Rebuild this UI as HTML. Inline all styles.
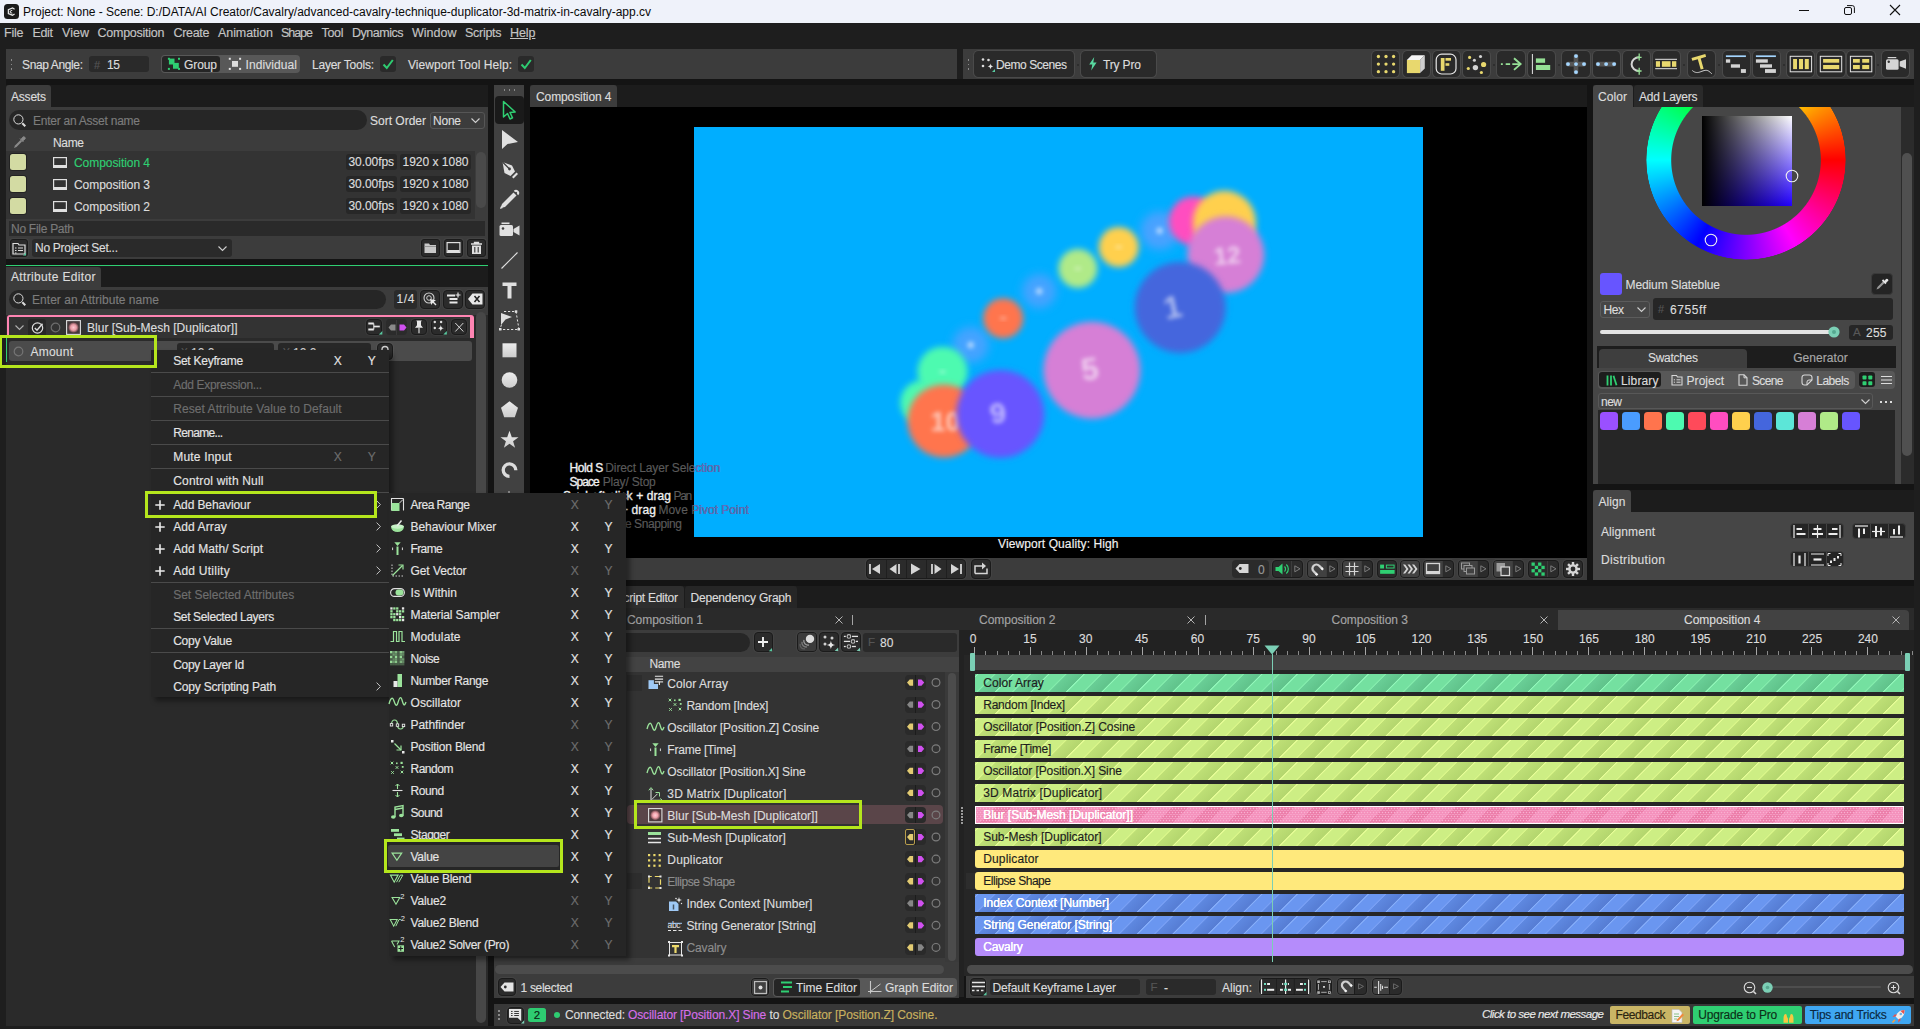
<!DOCTYPE html>
<html><head><meta charset="utf-8"><title>Cavalry</title>
<style>
html,body{margin:0;padding:0;background:#1e1e1e;}
body{width:1920px;height:1029px;overflow:hidden;position:relative;font-family:'Liberation Sans',sans-serif;font-size:12px;color:#dcdcdc;}
#app{position:absolute;left:0;top:0;width:1920px;height:1029px;overflow:hidden;background:#1e1e1e;}
#app div,#app svg{position:absolute;box-sizing:border-box;}
#app svg{overflow:visible;}
#app div{-webkit-text-stroke:0.15px currentColor;}

</style></head><body><div id="app">
<div style="left:0.00px;top:0.00px;width:1920.00px;height:22.60px;background:#eff2fa;"></div>
<svg style="left:4.00px;top:4.00px;" width="15" height="15" viewBox="0 0 15 15"><rect x="0" y="0" width="15" height="15" rx="3.5" fill="#1b1b1b"/><path d="M10.6 5.2 8.6 4 4.4 5.6 4.4 9.6 8.4 11.2 10.6 10" fill="none" stroke="#e8e8e8" stroke-width="1.3"/><path d="M8.3 6.3 6.3 7 6.3 8.6 8.3 9.2" fill="none" stroke="#e8e8e8" stroke-width="1"/></svg>
<div style="left:23.00px;top:2.50px;height:18px;line-height:18px;color:#0a0a0a;white-space:pre;font-family:'Liberation Sans',sans-serif;font-size:12px;letter-spacing:-0.016px;-webkit-text-stroke:0;">Project: None - Scene: D:/DATA/AI Creator/Cavalry/advanced-cavalry-technique-duplicator-3d-matrix-in-cavalry-app.cv</div>
<svg style="left:1798.00px;top:3.90px;" width="14" height="14" viewBox="0 0 14 14"><path d="M1 6.5h10" stroke="#111" stroke-width="1"/></svg>
<svg style="left:1842.90px;top:4.10px;" width="14" height="14" viewBox="0 0 14 14"><rect x="1.5" y="3.5" width="7" height="7" rx="1.5" fill="none" stroke="#111" stroke-width="1"/><path d="M4 1.600h5.300a2.100 2.100 0 0 1 2.100 2.100V9" fill="none" stroke="#111" stroke-width="1"/></svg>
<svg style="left:1889.10px;top:4.10px;" width="14" height="14" viewBox="0 0 14 14"><path d="M1 1l10 10M11 1 1 11" stroke="#111" stroke-width="1.1"/></svg>
<div style="left:0.00px;top:23.00px;width:1920.00px;height:26.00px;background:#1e1e1e;"></div>
<div style="left:4.00px;top:23.75px;height:18.5px;line-height:18.5px;color:#c4c4c4;white-space:pre;font-family:'Liberation Sans',sans-serif;font-size:12.5px;letter-spacing:-0.219px;">File</div>
<div style="left:32.50px;top:23.75px;height:18.5px;line-height:18.5px;color:#c4c4c4;white-space:pre;font-family:'Liberation Sans',sans-serif;font-size:12.5px;letter-spacing:-0.349px;">Edit</div>
<div style="left:62.00px;top:23.75px;height:18.5px;line-height:18.5px;color:#c4c4c4;white-space:pre;font-family:'Liberation Sans',sans-serif;font-size:12.5px;letter-spacing:0.042px;">View</div>
<div style="left:97.50px;top:23.75px;height:18.5px;line-height:18.5px;color:#c4c4c4;white-space:pre;font-family:'Liberation Sans',sans-serif;font-size:12.5px;letter-spacing:-0.248px;">Composition</div>
<div style="left:173.50px;top:23.75px;height:18.5px;line-height:18.5px;color:#c4c4c4;white-space:pre;font-family:'Liberation Sans',sans-serif;font-size:12.5px;letter-spacing:-0.306px;">Create</div>
<div style="left:218.00px;top:23.75px;height:18.5px;line-height:18.5px;color:#c4c4c4;white-space:pre;font-family:'Liberation Sans',sans-serif;font-size:12.5px;letter-spacing:-0.074px;">Animation</div>
<div style="left:281.00px;top:23.75px;height:18.5px;line-height:18.5px;color:#c4c4c4;white-space:pre;font-family:'Liberation Sans',sans-serif;font-size:12.5px;letter-spacing:-1.039px;">Shape</div>
<div style="left:321.50px;top:23.75px;height:18.5px;line-height:18.5px;color:#c4c4c4;white-space:pre;font-family:'Liberation Sans',sans-serif;font-size:12.5px;letter-spacing:-0.312px;">Tool</div>
<div style="left:352.00px;top:23.75px;height:18.5px;line-height:18.5px;color:#c4c4c4;white-space:pre;font-family:'Liberation Sans',sans-serif;font-size:12.5px;letter-spacing:-0.482px;">Dynamics</div>
<div style="left:412.00px;top:23.75px;height:18.5px;line-height:18.5px;color:#c4c4c4;white-space:pre;font-family:'Liberation Sans',sans-serif;font-size:12.5px;letter-spacing:0.006px;">Window</div>
<div style="left:465.00px;top:23.75px;height:18.5px;line-height:18.5px;color:#c4c4c4;white-space:pre;font-family:'Liberation Sans',sans-serif;font-size:12.5px;letter-spacing:-0.284px;">Scripts</div>
<div style="left:510.00px;top:23.75px;height:18.5px;line-height:18.5px;color:#c4c4c4;white-space:pre;font-family:'Liberation Sans',sans-serif;font-size:12.5px;letter-spacing:-0.073px;text-decoration:underline;">Help</div>
<div style="left:6.00px;top:49.00px;width:951.00px;height:30.00px;background:#3c3c3c;"></div>
<div style="left:10.50px;top:59.00px;width:1.50px;height:1.50px;background:#8a8a8a;"></div>
<div style="left:10.50px;top:63.50px;width:1.50px;height:1.50px;background:#8a8a8a;"></div>
<div style="left:10.50px;top:68.00px;width:1.50px;height:1.50px;background:#8a8a8a;"></div>
<div style="left:22.00px;top:56.00px;height:18px;line-height:18px;color:#dcdcdc;white-space:pre;font-family:'Liberation Sans',sans-serif;font-size:12px;letter-spacing:-0.373px;">Snap Angle:</div>
<div style="left:89.00px;top:56.00px;width:60.00px;height:16.00px;background:#2a2a2a;border-radius:3px;"></div>
<div style="left:94.00px;top:56.50px;height:17px;line-height:17px;color:#555;white-space:pre;font-family:'Liberation Sans',sans-serif;font-size:11px;">#</div>
<div style="left:107.00px;top:56.00px;height:18px;line-height:18px;color:#dcdcdc;white-space:pre;font-family:'Liberation Sans',sans-serif;font-size:12px;letter-spacing:-0.359px;">15</div>
<div style="left:161.00px;top:55.00px;width:139.00px;height:18.00px;background:#585858;border-radius:4px;"></div>
<div style="left:162.20px;top:56.00px;width:57.60px;height:15.80px;background:#252525;border-radius:3px;"></div>
<svg style="left:0;top:0;pointer-events:none;" width="1920" height="1029" viewBox="0 0 1920 1029"><rect x="167.90" y="57.80" width="2.00" height="2.00" fill="#2ecc71" /><rect x="167.90" y="67.90" width="2.00" height="2.00" fill="#2ecc71" /><rect x="178.00" y="57.80" width="2.00" height="2.00" fill="#2ecc71" /><rect x="178.00" y="67.90" width="2.00" height="2.00" fill="#2ecc71" /><rect x="168.90" y="58.60" width="5.60" height="5.90" fill="#2ecc71" /><rect x="173.00" y="62.90" width="5.80" height="5.85" fill="#2ecc71" /><rect x="228.80" y="57.80" width="2.00" height="2.00" fill="#e2e2e2" /><rect x="228.80" y="67.90" width="2.00" height="2.00" fill="#e2e2e2" /><rect x="239.10" y="57.80" width="2.00" height="2.00" fill="#e2e2e2" /><rect x="239.10" y="67.90" width="2.00" height="2.00" fill="#e2e2e2" /><rect x="232.00" y="61.00" width="6.00" height="5.80" fill="#dcdcdc" /></svg>
<div style="left:184.00px;top:56.00px;height:18px;line-height:18px;color:#dcdcdc;white-space:pre;font-family:'Liberation Sans',sans-serif;font-size:12px;letter-spacing:-0.090px;">Group</div>
<div style="left:245.50px;top:56.00px;height:18px;line-height:18px;color:#dcdcdc;white-space:pre;font-family:'Liberation Sans',sans-serif;font-size:12px;letter-spacing:0.089px;">Individual</div>
<div style="left:312.00px;top:56.00px;height:18px;line-height:18px;color:#dcdcdc;white-space:pre;font-family:'Liberation Sans',sans-serif;font-size:12px;letter-spacing:-0.226px;">Layer Tools:</div>
<div style="left:380.00px;top:56.00px;width:16.00px;height:16.00px;background:#2a2a2a;border-radius:3px;"></div>
<svg style="left:382.00px;top:58.00px;" width="12" height="12" viewBox="0 0 12 12"><path d="M1.500 6.500 4.800 10 10.800 2" fill="none" stroke="#2ecc71" stroke-width="2"/></svg>
<div style="left:408.00px;top:56.00px;height:18px;line-height:18px;color:#dcdcdc;white-space:pre;font-family:'Liberation Sans',sans-serif;font-size:12px;letter-spacing:0.058px;">Viewport Tool Help:</div>
<div style="left:517.50px;top:56.00px;width:16.50px;height:16.00px;background:#2a2a2a;border-radius:3px;"></div>
<svg style="left:519.80px;top:58.00px;" width="12" height="12" viewBox="0 0 12 12"><path d="M1.500 6.500 4.800 10 10.800 2" fill="none" stroke="#2ecc71" stroke-width="2"/></svg>
<div style="left:963.00px;top:49.00px;width:950.60px;height:30.00px;background:#3c3c3c;"></div>
<div style="left:967.50px;top:59.00px;width:1.50px;height:1.50px;background:#8a8a8a;"></div>
<div style="left:967.50px;top:63.50px;width:1.50px;height:1.50px;background:#8a8a8a;"></div>
<div style="left:967.50px;top:68.00px;width:1.50px;height:1.50px;background:#8a8a8a;"></div>
<div style="left:974.00px;top:50.80px;width:100.00px;height:26.60px;border-radius:4.5px;background:#2a2a2a;box-shadow:0 0 0 1px rgba(255,255,255,.075);"></div>
<svg style="left:980.00px;top:57.00px;" width="15" height="15" viewBox="0 0 15 15"><path d="M10.500 6.500c.4 2 .9 2.500 2.900 2.900c-2 .4-2.500 .9-2.900 2.900c-.4-2-.9-2.500-2.900-2.900c2-.4 2.500-.9 2.900-2.900z" fill="#e6e6e6"/><circle cx="3" cy="2.500" r="1.300" fill="#ddd"/><circle cx="8.500" cy="3" r="1.300" fill="#ddd"/><circle cx="3" cy="9" r="1.300" fill="#ddd"/><path d="M15 12v3h-3z" fill="#58c9a0"/></svg>
<div style="left:996.00px;top:56.00px;height:18px;line-height:18px;color:#dcdcdc;white-space:pre;font-family:'Liberation Sans',sans-serif;font-size:12px;letter-spacing:-0.438px;">Demo Scenes</div>
<div style="left:1076.50px;top:63.50px;width:2.00px;height:2.00px;background:#2a2a2a;border-radius:1px;"></div>
<div style="left:1081.00px;top:50.80px;width:74.50px;height:26.60px;border-radius:4.5px;background:#2a2a2a;box-shadow:0 0 0 1px rgba(255,255,255,.075);"></div>
<svg style="left:1087.50px;top:57.00px;" width="10" height="14" viewBox="0 0 10 14"><path d="M6.200 0 1.200 7.600h3.100L3.200 13.500 8.600 5.600H5.300z" fill="#58d9a0"/></svg>
<div style="left:1103.00px;top:56.00px;height:18px;line-height:18px;color:#dcdcdc;white-space:pre;font-family:'Liberation Sans',sans-serif;font-size:12px;letter-spacing:-0.148px;">Try Pro</div>
<div style="left:1492.60px;top:63.50px;width:2.00px;height:2.00px;background:#2a2a2a;border-radius:1px;"></div>
<div style="left:1557.60px;top:63.50px;width:2.00px;height:2.00px;background:#2a2a2a;border-radius:1px;"></div>
<div style="left:1682.70px;top:63.50px;width:2.00px;height:2.00px;background:#2a2a2a;border-radius:1px;"></div>
<div style="left:1717.70px;top:63.50px;width:2.00px;height:2.00px;background:#2a2a2a;border-radius:1px;"></div>
<div style="left:1782.50px;top:63.50px;width:2.00px;height:2.00px;background:#2a2a2a;border-radius:1px;"></div>
<div style="left:1877.30px;top:63.50px;width:2.00px;height:2.00px;background:#2a2a2a;border-radius:1px;"></div>
<div style="left:1372.30px;top:50.80px;width:27.20px;height:26.60px;background:#2a2a2a;border-radius:4.5px;box-shadow:0 0 0 1px rgba(255,255,255,.075);"></div>
<div style="left:1402.50px;top:50.80px;width:27.20px;height:26.60px;background:#2a2a2a;border-radius:4.5px;box-shadow:0 0 0 1px rgba(255,255,255,.075);"></div>
<div style="left:1432.60px;top:50.80px;width:27.20px;height:26.60px;background:#2a2a2a;border-radius:4.5px;box-shadow:0 0 0 1px rgba(255,255,255,.075);"></div>
<div style="left:1462.70px;top:50.80px;width:27.20px;height:26.60px;background:#2a2a2a;border-radius:4.5px;box-shadow:0 0 0 1px rgba(255,255,255,.075);"></div>
<div style="left:1497.40px;top:50.80px;width:27.20px;height:26.60px;background:#2a2a2a;border-radius:4.5px;box-shadow:0 0 0 1px rgba(255,255,255,.075);"></div>
<div style="left:1527.60px;top:50.80px;width:27.20px;height:26.60px;background:#2a2a2a;border-radius:4.5px;box-shadow:0 0 0 1px rgba(255,255,255,.075);"></div>
<div style="left:1562.40px;top:50.80px;width:27.20px;height:26.60px;background:#2a2a2a;border-radius:4.5px;box-shadow:0 0 0 1px rgba(255,255,255,.075);"></div>
<div style="left:1592.60px;top:50.80px;width:27.20px;height:26.60px;background:#2a2a2a;border-radius:4.5px;box-shadow:0 0 0 1px rgba(255,255,255,.075);"></div>
<div style="left:1622.70px;top:50.80px;width:27.20px;height:26.60px;background:#2a2a2a;border-radius:4.5px;box-shadow:0 0 0 1px rgba(255,255,255,.075);"></div>
<div style="left:1652.60px;top:50.80px;width:27.20px;height:26.60px;background:#2a2a2a;border-radius:4.5px;box-shadow:0 0 0 1px rgba(255,255,255,.075);"></div>
<div style="left:1687.50px;top:50.80px;width:27.20px;height:26.60px;background:#2a2a2a;border-radius:4.5px;box-shadow:0 0 0 1px rgba(255,255,255,.075);"></div>
<div style="left:1722.50px;top:50.80px;width:27.20px;height:26.60px;background:#2a2a2a;border-radius:4.5px;box-shadow:0 0 0 1px rgba(255,255,255,.075);"></div>
<div style="left:1752.60px;top:50.80px;width:27.20px;height:26.60px;background:#2a2a2a;border-radius:4.5px;box-shadow:0 0 0 1px rgba(255,255,255,.075);"></div>
<div style="left:1787.30px;top:50.80px;width:27.20px;height:26.60px;background:#2a2a2a;border-radius:4.5px;box-shadow:0 0 0 1px rgba(255,255,255,.075);"></div>
<div style="left:1817.40px;top:50.80px;width:27.20px;height:26.60px;background:#2a2a2a;border-radius:4.5px;box-shadow:0 0 0 1px rgba(255,255,255,.075);"></div>
<div style="left:1847.40px;top:50.80px;width:27.20px;height:26.60px;background:#2a2a2a;border-radius:4.5px;box-shadow:0 0 0 1px rgba(255,255,255,.075);"></div>
<div style="left:1882.20px;top:50.80px;width:27.20px;height:26.60px;background:#2a2a2a;border-radius:4.5px;box-shadow:0 0 0 1px rgba(255,255,255,.075);"></div>
<svg style="left:0;top:0;pointer-events:none;" width="1920" height="1029" viewBox="0 0 1920 1029"><circle cx="1378.40" cy="56.50" r="1.65" fill="#e8d86e" /><circle cx="1378.40" cy="64.10" r="1.65" fill="#e8d86e" /><circle cx="1378.40" cy="71.70" r="1.65" fill="#e8d86e" /><circle cx="1386.00" cy="56.50" r="1.65" fill="#e8d86e" /><circle cx="1386.00" cy="64.10" r="1.65" fill="#e8d86e" /><circle cx="1386.00" cy="71.70" r="1.65" fill="#e8d86e" /><circle cx="1393.60" cy="56.50" r="1.65" fill="#e8d86e" /><circle cx="1393.60" cy="64.10" r="1.65" fill="#e8d86e" /><circle cx="1393.60" cy="71.70" r="1.65" fill="#e8d86e" /><rect x="1406.90" y="59.90" width="13.20" height="13.20" fill="#e8d86e" /><path d="M1406.9 59.9 1411.6 55.2h13.2L1420.1 59.9z" fill="#f6f6f6" /><path d="M1420.1 59.9 1424.8 55.2v13.200l-4.700 4.700z" fill="#cfcfcf" /><rect x="1436.2" y="54.200" width="19.800" height="19.800" rx="5.500" fill="none" stroke="#e6e6e6" stroke-width="1.200"/><rect x="1440.80" y="58.00" width="3.70" height="12.80" fill="#e8d86e" /><rect x="1445.50" y="58.00" width="5.50" height="2.70" fill="#e8d86e" /><rect x="1445.50" y="63.20" width="3.80" height="2.60" fill="#e8d86e" /><circle cx="1469.60" cy="57.40" r="1.55" fill="#e8d86e" /><circle cx="1480.50" cy="56.50" r="1.55" fill="#d4d4d4" /><circle cx="1474.40" cy="60.30" r="1.55" fill="#d4d4d4" /><circle cx="1483.60" cy="64.50" r="2.6" fill="#e8d86e" /><circle cx="1475.40" cy="67.60" r="2.7" fill="#d4d4d4" /><circle cx="1468.30" cy="68.50" r="1.6" fill="#e8d86e" /><circle cx="1481.40" cy="72.50" r="1.6" fill="#e8d86e" /><path d="M1500.9 64.1h1.900M1505.7 64.1h4.400M1512.3 64.1h8" fill="none" stroke="#96e096" stroke-width="1.9" /><path d="M1514 58.300 1520.6 64.1 1514 69.900" fill="none" stroke="#96e096" stroke-width="1.9" /><path d="M1532.4 54v20" fill="none" stroke="#e6e6e6" stroke-width="1" /><rect x="1535.90" y="58.40" width="9.20" height="4.40" fill="#96e096" /><rect x="1535.90" y="65.00" width="14.30" height="5.00" fill="#96e096" /><path d="M1576 56v16.200M1567.900 64.1h16.200" fill="none" stroke="#565656" stroke-width="4.6" stroke-linecap="round"/><circle cx="1576.00" cy="64.10" r="1.95" fill="#a4d6ff" /><circle cx="1576.00" cy="56.10" r="1.95" fill="#a4d6ff" /><circle cx="1576.00" cy="72.10" r="1.95" fill="#a4d6ff" /><circle cx="1568.00" cy="64.10" r="1.95" fill="#a4d6ff" /><circle cx="1584.00" cy="64.10" r="1.95" fill="#a4d6ff" /><path d="M1598 64.1h16.100" fill="none" stroke="#565656" stroke-width="4.6" stroke-linecap="round"/><circle cx="1598.00" cy="64.10" r="1.95" fill="#a4d6ff" /><circle cx="1606.10" cy="64.10" r="1.95" fill="#a4d6ff" /><circle cx="1614.10" cy="64.10" r="1.95" fill="#a4d6ff" /><path d="M1639.2 57.300a7.600 6.850 0 0 0 0 13.700" fill="none" stroke="#d4d4d4" stroke-width="2" /><path d="M1639.2 53.500v7M1636.600 57.300h5M1639.2 67.800v7M1636.600 71h5" fill="none" stroke="#96e096" stroke-width="1.3" /><path d="M1655.2 59.300h21.800M1655.2 68.700h21.800" fill="none" stroke="#e6e6e6" stroke-width="1" /><rect x="1655.90" y="61.20" width="4.10" height="5.60" fill="#e8d86e" /><rect x="1661.90" y="61.20" width="8.60" height="5.60" fill="#e8d86e" /><rect x="1672.00" y="61.20" width="4.30" height="5.60" fill="#e8d86e" /><path d="M1691.500 58 1705.300 54 1706.100 56.800 1700.700 58.400 1703.600 68.700 1700.700 69.500 1697.800 59.200 1692.300 60.800z" fill="#e8d86e" /><path d="M1692.300 70.500c3 2.600 5.500 2.400 8.500 1.200s6-2.200 8.300-.3 2 1.800 2.900 2.600" fill="none" stroke="#d4d4d4" stroke-width="1" /><path d="M1725.9 56.200h20" fill="none" stroke="#a4d6ff" stroke-width="1.7" /><rect x="1725.90" y="59.30" width="4.30" height="3.40" fill="#d4d4d4" /><rect x="1730.90" y="64.30" width="9.10" height="3.40" fill="#d4d4d4" /><rect x="1740.90" y="69.10" width="5.00" height="3.80" fill="#d4d4d4" /><path d="M1755.9 56.200h20" fill="none" stroke="#a4d6ff" stroke-width="1.7" /><rect x="1755.90" y="59.30" width="11.90" height="3.40" fill="#d4d4d4" /><rect x="1760.00" y="64.30" width="12.00" height="3.40" fill="#d4d4d4" /><rect x="1765.00" y="69.10" width="10.90" height="3.80" fill="#d4d4d4" /><rect x="1790.2" y="56.300" width="21.400" height="15.500" fill="none" stroke="#e6e6e6" stroke-width="1"/><rect x="1820.3" y="56.300" width="21.400" height="15.500" fill="none" stroke="#e6e6e6" stroke-width="1"/><rect x="1850.4" y="56.300" width="21.400" height="15.500" fill="none" stroke="#e6e6e6" stroke-width="1"/><rect x="1793.10" y="59.00" width="3.90" height="10.10" fill="#e8d86e" /><rect x="1799.00" y="59.00" width="4.00" height="10.10" fill="#e8d86e" /><rect x="1804.80" y="59.00" width="4.00" height="10.10" fill="#e8d86e" /><rect x="1823.10" y="59.00" width="16.10" height="3.70" fill="#e8d86e" /><rect x="1823.10" y="65.00" width="16.10" height="4.10" fill="#e8d86e" /><rect x="1853.00" y="59.00" width="6.80" height="3.70" fill="#e8d86e" /><rect x="1853.00" y="65.00" width="6.80" height="4.10" fill="#e8d86e" /><rect x="1862.20" y="59.00" width="7.00" height="3.70" fill="#e8d86e" /><rect x="1862.20" y="65.00" width="7.00" height="4.10" fill="#e8d86e" /><rect x="1886.00" y="59.30" width="12.60" height="10.45" fill="#d4d4d4" rx="1.5" /><path d="M1899.700 61.600 1906 59.300v9.400l-6.300-2.400z" fill="#d4d4d4" /><rect x="1887.70" y="57.00" width="8.60" height="1.20" fill="#d4d4d4" /><circle cx="1888.75" cy="61.70" r="1.2" fill="#333" /></svg>
<div style="left:6.00px;top:79.00px;width:1907.70px;height:946.80px;background:#141414;"></div>
<div style="left:6.00px;top:85.00px;width:482.00px;height:22.00px;background:#1c1c1c;"></div>
<div style="left:6.00px;top:266.00px;width:482.00px;height:21.00px;background:#1c1c1c;"></div>
<div style="left:530.00px;top:85.00px;width:1057.00px;height:22.00px;background:#1c1c1c;"></div>
<div style="left:1593.00px;top:85.00px;width:320.70px;height:22.00px;background:#1c1c1c;"></div>
<div style="left:1593.00px;top:490.20px;width:320.70px;height:21.80px;background:#1c1c1c;"></div>
<div style="left:494.00px;top:586.00px;width:1419.70px;height:22.00px;background:#1c1c1c;"></div>
<div style="left:1593.00px;top:580.00px;width:320.70px;height:6.00px;background:#141414;"></div>
<div style="left:6.00px;top:85.00px;width:45.00px;height:22.50px;background:#3c3c3c;border-radius:3px 3px 0 0;"></div>
<div style="left:11.00px;top:87.50px;height:18px;line-height:18px;color:#dcdcdc;white-space:pre;font-family:'Liberation Sans',sans-serif;font-size:12px;letter-spacing:-0.203px;">Assets</div>
<div style="left:6.00px;top:107.00px;width:482.00px;height:152.00px;background:#3c3c3c;"></div>
<div style="left:9.00px;top:110.20px;width:358.00px;height:19.80px;background:#262626;border-radius:10px;"></div>
<svg style="left:12.50px;top:113.50px;" width="14" height="14" viewBox="0 0 14 14"><circle cx="5.400" cy="5.400" r="4.600" fill="none" stroke="#dcdcdc" stroke-width="1"/><path d="M9.300 9.300 12.300 12.300" stroke="#dcdcdc" stroke-width="2"/></svg>
<div style="left:33.00px;top:111.50px;height:18px;line-height:18px;color:#7c7c7c;white-space:pre;font-family:'Liberation Sans',sans-serif;font-size:12px;letter-spacing:-0.245px;">Enter an Asset name</div>
<div style="left:370.00px;top:111.50px;height:18px;line-height:18px;color:#dcdcdc;white-space:pre;font-family:'Liberation Sans',sans-serif;font-size:12px;">Sort Order</div>
<div style="left:430.00px;top:112.00px;width:54.50px;height:16.50px;border-radius:3px;background:#3c3c3c;border:1px solid #565656;"></div>
<div style="left:433.00px;top:111.50px;height:18px;line-height:18px;color:#dcdcdc;white-space:pre;font-family:'Liberation Sans',sans-serif;font-size:12px;letter-spacing:-0.229px;">None</div>
<svg style="left:471.00px;top:118.00px;" width="9" height="5" viewBox="0 0 9 5"><path d="M.5 .5 4.5 4.5 8.5 .5" fill="none" stroke="#cfcfcf" stroke-width="1.100"/></svg>
<svg style="left:13.00px;top:136.00px;" width="12" height="13" viewBox="0 0 12 13"><path d="M1 12 2 9.500 7.500 4 9 5.500 3.500 11z" fill="#8a8a8a"/><path d="M7 2.500 10.500 6 M8 3.500 9.800 1.200 a1.300 1.300 0 0 1 2 2 L9.500 5z" fill="#8a8a8a" stroke="#8a8a8a" stroke-width="1"/></svg>
<div style="left:53.00px;top:134.00px;height:18px;line-height:18px;color:#dcdcdc;white-space:pre;font-family:'Liberation Sans',sans-serif;font-size:12px;letter-spacing:-0.339px;">Name</div>
<div style="left:6.00px;top:150.50px;width:468.50px;height:68.50px;background:#333333;"></div>
<div style="left:474.50px;top:150.50px;width:13.50px;height:68.50px;background:#3c3c3c;"></div>
<div style="left:476.00px;top:152.00px;width:9.60px;height:55.60px;background:#4a4a4a;border-radius:5px;"></div>
<div style="left:10.00px;top:154.20px;width:16.00px;height:16.00px;background:#d3dba3;border-radius:2.5px;box-shadow:0 0 0 1px rgba(0,0,0,.3);"></div>
<svg style="left:53.00px;top:156.50px;" width="14" height="12" viewBox="0 0 14 12"><rect x=".6" y=".6" width="12.800" height="9.800" fill="none" stroke="#e0e0e0" stroke-width="1.200"/><rect x="1" y="8" width="12" height="2.500" fill="#e0e0e0"/></svg>
<div style="left:74.00px;top:153.80px;height:18px;line-height:18px;color:#2fcf72;white-space:pre;font-family:'Liberation Sans',sans-serif;font-size:12px;letter-spacing:-0.060px;">Composition 4</div>
<div style="left:346.00px;top:154.20px;width:50.60px;height:16.00px;background:#272727;border-radius:3px;"></div>
<div style="left:348.50px;top:152.70px;height:18px;line-height:18px;color:#dcdcdc;white-space:pre;font-family:'Liberation Sans',sans-serif;font-size:12px;letter-spacing:-0.078px;">30.00fps</div>
<div style="left:400.00px;top:154.20px;width:71.00px;height:16.00px;background:#272727;border-radius:3px;"></div>
<div style="left:402.50px;top:152.70px;height:18px;line-height:18px;color:#dcdcdc;white-space:pre;font-family:'Liberation Sans',sans-serif;font-size:12px;letter-spacing:-0.006px;">1920 x 1080</div>
<div style="left:10.00px;top:176.20px;width:16.00px;height:16.00px;background:#d3dba3;border-radius:2.5px;box-shadow:0 0 0 1px rgba(0,0,0,.3);"></div>
<svg style="left:53.00px;top:178.50px;" width="14" height="12" viewBox="0 0 14 12"><rect x=".6" y=".6" width="12.800" height="9.800" fill="none" stroke="#e0e0e0" stroke-width="1.200"/><rect x="1" y="8" width="12" height="2.500" fill="#e0e0e0"/></svg>
<div style="left:74.00px;top:175.80px;height:18px;line-height:18px;color:#dcdcdc;white-space:pre;font-family:'Liberation Sans',sans-serif;font-size:12px;letter-spacing:-0.060px;">Composition 3</div>
<div style="left:346.00px;top:176.20px;width:50.60px;height:16.00px;background:#272727;border-radius:3px;"></div>
<div style="left:348.50px;top:174.70px;height:18px;line-height:18px;color:#dcdcdc;white-space:pre;font-family:'Liberation Sans',sans-serif;font-size:12px;letter-spacing:-0.078px;">30.00fps</div>
<div style="left:400.00px;top:176.20px;width:71.00px;height:16.00px;background:#272727;border-radius:3px;"></div>
<div style="left:402.50px;top:174.70px;height:18px;line-height:18px;color:#dcdcdc;white-space:pre;font-family:'Liberation Sans',sans-serif;font-size:12px;letter-spacing:-0.006px;">1920 x 1080</div>
<div style="left:10.00px;top:198.20px;width:16.00px;height:16.00px;background:#d3dba3;border-radius:2.5px;box-shadow:0 0 0 1px rgba(0,0,0,.3);"></div>
<svg style="left:53.00px;top:200.50px;" width="14" height="12" viewBox="0 0 14 12"><rect x=".6" y=".6" width="12.800" height="9.800" fill="none" stroke="#e0e0e0" stroke-width="1.200"/><rect x="1" y="8" width="12" height="2.500" fill="#e0e0e0"/></svg>
<div style="left:74.00px;top:197.80px;height:18px;line-height:18px;color:#dcdcdc;white-space:pre;font-family:'Liberation Sans',sans-serif;font-size:12px;letter-spacing:-0.060px;">Composition 2</div>
<div style="left:346.00px;top:198.20px;width:50.60px;height:16.00px;background:#272727;border-radius:3px;"></div>
<div style="left:348.50px;top:196.70px;height:18px;line-height:18px;color:#dcdcdc;white-space:pre;font-family:'Liberation Sans',sans-serif;font-size:12px;letter-spacing:-0.078px;">30.00fps</div>
<div style="left:400.00px;top:198.20px;width:71.00px;height:16.00px;background:#272727;border-radius:3px;"></div>
<div style="left:402.50px;top:196.70px;height:18px;line-height:18px;color:#dcdcdc;white-space:pre;font-family:'Liberation Sans',sans-serif;font-size:12px;letter-spacing:-0.006px;">1920 x 1080</div>
<div style="left:9.00px;top:220.60px;width:476.00px;height:15.10px;background:#2a2a2a;"></div>
<div style="left:11.00px;top:219.50px;height:18px;line-height:18px;color:#7a7a7a;white-space:pre;font-family:'Liberation Sans',sans-serif;font-size:12px;letter-spacing:-0.276px;">No File Path</div>
<div style="left:10.00px;top:239.00px;width:18.00px;height:18.00px;border-radius:3px;background:#2b2b2b;border:1px solid #1b1b1b;box-shadow:0 0 0 1px rgba(255,255,255,.04);"></div>
<svg style="left:12.00px;top:241.50px;" width="14" height="13" viewBox="0 0 14 13"><path d="M1 1.500h5l1 1.500h6v9h-12z" fill="none" stroke="#dedede" stroke-width="1.200"/><path d="M3 6h1.500M6 6h5M3 8.500h1.500M6 8.500h5M3 11h1.500" stroke="#dedede" stroke-width="1.100"/><path d="M14 10.500v3h-3z" fill="#58c9a0"/></svg>
<div style="left:32.00px;top:239.00px;width:200.00px;height:18.00px;background:#2a2a2a;border-radius:3px;"></div>
<div style="left:35.00px;top:239.30px;height:18px;line-height:18px;color:#dcdcdc;white-space:pre;font-family:'Liberation Sans',sans-serif;font-size:12px;letter-spacing:-0.273px;">No Project Set...</div>
<svg style="left:217.50px;top:246.00px;" width="9" height="5" viewBox="0 0 9 5"><path d="M.5 .5 4.5 4.5 8.5 .5" fill="none" stroke="#cfcfcf" stroke-width="1.100"/></svg>
<div style="left:420.50px;top:239.00px;width:19.00px;height:18.00px;border-radius:3px;background:#2b2b2b;border:1px solid #1b1b1b;box-shadow:0 0 0 1px rgba(255,255,255,.04);"></div>
<svg style="left:422.50px;top:241.00px;" width="15" height="14" viewBox="0 0 15 14"><path d="M1.500 2.500h4.500l1 1.500h6v8h-11.500z" fill="#c8c8c8"/><path d="M1.500 5.500h11.500" stroke="#888" stroke-width=".8"/></svg>
<div style="left:443.50px;top:239.00px;width:19.00px;height:18.00px;border-radius:3px;background:#2b2b2b;border:1px solid #1b1b1b;box-shadow:0 0 0 1px rgba(255,255,255,.04);"></div>
<svg style="left:445.50px;top:241.00px;" width="15" height="14" viewBox="0 0 15 14"><rect x="1.100" y="1.600" width="12.800" height="9.800" fill="none" stroke="#e0e0e0" stroke-width="1.200"/><rect x="1.500" y="9" width="12" height="2.500" fill="#e0e0e0"/></svg>
<div style="left:466.50px;top:239.00px;width:19.00px;height:18.00px;border-radius:3px;background:#2b2b2b;border:1px solid #1b1b1b;box-shadow:0 0 0 1px rgba(255,255,255,.04);"></div>
<svg style="left:468.50px;top:241.00px;" width="15" height="14" viewBox="0 0 15 14"><path d="M3 4.500h9v8.500h-9z" fill="#e0e0e0"/><path d="M2 3h11M5.500 3v-1.500h4v1.500" stroke="#e0e0e0" stroke-width="1.300" fill="none"/><path d="M5.800 6v5.500M9.200 6v5.500" stroke="#333" stroke-width="1.100"/></svg>
<div style="left:6.00px;top:264.80px;width:482.00px;height:1.40px;background:#2fcf72;"></div>
<div style="left:6.00px;top:266.50px;width:95.00px;height:21.00px;background:#3c3c3c;border-radius:0 3px 0 0;"></div>
<div style="left:11.00px;top:268.00px;height:18px;line-height:18px;color:#dcdcdc;white-space:pre;font-family:'Liberation Sans',sans-serif;font-size:12px;letter-spacing:0.342px;">Attribute Editor</div>
<div style="left:6.00px;top:287.00px;width:482.00px;height:28.00px;background:#3c3c3c;"></div>
<div style="left:6.00px;top:315.00px;width:482.00px;height:710.80px;background:#2a2a2a;"></div>
<div style="left:476.40px;top:312.00px;width:9.80px;height:710.90px;background:#474747;border-radius:5px;"></div>
<div style="left:8.50px;top:289.50px;width:377.50px;height:19.50px;background:#262626;border-radius:10px;"></div>
<svg style="left:12.50px;top:292.50px;" width="14" height="14" viewBox="0 0 14 14"><circle cx="5.400" cy="5.400" r="4.600" fill="none" stroke="#dcdcdc" stroke-width="1"/><path d="M9.300 9.300 12.300 12.300" stroke="#dcdcdc" stroke-width="2"/></svg>
<div style="left:32.00px;top:290.50px;height:18px;line-height:18px;color:#7c7c7c;white-space:pre;font-family:'Liberation Sans',sans-serif;font-size:12px;letter-spacing:0.042px;">Enter an Attribute name</div>
<div style="left:394.00px;top:289.50px;width:23.00px;height:19.20px;background:#2a2a2a;border-radius:3px;"></div>
<div style="left:396.50px;top:290.30px;height:18px;line-height:18px;color:#dcdcdc;white-space:pre;font-family:'Liberation Sans',sans-serif;font-size:12px;letter-spacing:0.656px;">1/4</div>
<div style="left:420.40px;top:289.50px;width:19.50px;height:19.20px;border-radius:4px;background:#2b2b2b;border:1px solid #1b1b1b;box-shadow:0 0 0 1px rgba(255,255,255,.04);"></div>
<svg style="left:421.90px;top:291.00px;" width="17" height="16" viewBox="0 0 17 16"><circle cx="7" cy="7" r="5" fill="none" stroke="#cfcfcf" stroke-width="1.100"/><circle cx="7" cy="7" r="2.300" fill="none" stroke="#cfcfcf" stroke-width="1"/><path d="M8 8 9.200 14 10.800 11.800 13.500 14.500 14.500 13.500 11.800 10.800 14 9.300z" fill="#e8e8e8"/></svg>
<div style="left:443.00px;top:289.50px;width:19.50px;height:19.20px;border-radius:4px;background:#2b2b2b;border:1px solid #1b1b1b;box-shadow:0 0 0 1px rgba(255,255,255,.04);"></div>
<svg style="left:444.50px;top:291.00px;" width="17" height="16" viewBox="0 0 17 16"><path d="M2 4.500h8M4.500 8h8M4.500 11.500h8" stroke="#e8e8e8" stroke-width="2"/><path d="M13 1.500v5M10.500 4h5" stroke="#e8e8e8" stroke-width="1.200"/></svg>
<div style="left:465.30px;top:289.50px;width:19.50px;height:19.20px;border-radius:4px;background:#2b2b2b;border:1px solid #1b1b1b;box-shadow:0 0 0 1px rgba(255,255,255,.04);"></div>
<svg style="left:466.80px;top:291.00px;" width="17" height="16" viewBox="0 0 17 16"><path d="M5.500 2.500h10v11h-10L1 8z" fill="#e8e8e8"/><path d="M7.500 5 12.500 11M12.500 5 7.500 11" stroke="#222" stroke-width="1.500"/></svg>
<div style="left:6.50px;top:314.60px;width:467.50px;height:23.70px;background:#ff85b3;border-radius:3px 3px 0 0;"></div>
<div style="left:9.00px;top:316.50px;width:461.00px;height:21.80px;background:#333333;"></div>
<svg style="left:14.50px;top:325.00px;" width="9" height="5" viewBox="0 0 9 5"><path d="M.5 .5 4.5 4.5 8.5 .5" fill="none" stroke="#b0b0b0" stroke-width="1.100"/></svg>
<div style="left:28.00px;top:319.00px;width:18.00px;height:17.50px;background:#272727;border-radius:3px;"></div>
<svg style="left:30.50px;top:321.00px;" width="13" height="13" viewBox="0 0 13 13"><circle cx="6.500" cy="7" r="5.200" fill="none" stroke="#dcdcdc" stroke-width="1.200"/><path d="M3.800 7 6 9.300 11.500 2.800" fill="none" stroke="#dcdcdc" stroke-width="1.400"/></svg>
<svg style="left:49.50px;top:322.00px;" width="11" height="11" viewBox="0 0 11 11"><circle cx="5.500" cy="5.500" r="4.300" fill="none" stroke="#6c6c6c" stroke-width="1.200"/></svg>
<svg style="left:65.50px;top:320.00px;" width="15" height="15" viewBox="0 0 15 15"><defs><radialGradient id="bl1"><stop offset="0" stop-color="#ffc8d0"/><stop offset=".55" stop-color="#e79aa4"/><stop offset="1" stop-color="#5a3c40"/></radialGradient></defs><rect x=".6" y=".6" width="13.800" height="13.800" fill="#44383a" stroke="#dedede" stroke-width="1.100"/><circle cx="7.500" cy="7.500" r="5.300" fill="url(#bl1)"/></svg>
<div style="left:87.00px;top:318.50px;height:18px;line-height:18px;color:#dcdcdc;white-space:pre;font-family:'Liberation Sans',sans-serif;font-size:12px;letter-spacing:0.016px;">Blur [Sub-Mesh [Duplicator]]</div>
<div style="left:365.60px;top:318.60px;width:16.60px;height:16.90px;border-radius:4px;background:#2b2b2b;border:1px solid #1b1b1b;box-shadow:0 0 0 1px rgba(255,255,255,.04);"></div>
<svg style="left:365.60px;top:319.00px;" width="16.6" height="16.5" viewBox="0 0 16 16.500"><path d="M2 4.500h5.500M2 10.500h5.500" stroke="#e8e8e8" stroke-width="2"/><path d="M7.500 7.500h6" stroke="#e8e8e8" stroke-width="1.700"/><path d="M7.500 4.500v6" stroke="#e8e8e8" stroke-width="1"/><path d="M16 12v3.500h-3.500z" fill="#58c9a0"/></svg>
<div style="left:410.50px;top:318.60px;width:16.60px;height:16.90px;border-radius:4px;background:#2b2b2b;border:1px solid #1b1b1b;box-shadow:0 0 0 1px rgba(255,255,255,.04);"></div>
<svg style="left:410.50px;top:319.00px;" width="16.6" height="16.5" viewBox="0 0 16 16.500"><path d="M5 1.500h5.500l-.8 1.300v3.500l2 2.500h-8l2-2.500v-3.500z" fill="#e8e8e8"/><path d="M7.700 8.800v5.500" stroke="#e8e8e8" stroke-width="1.100"/></svg>
<div style="left:430.60px;top:318.60px;width:16.60px;height:16.90px;border-radius:4px;background:#2b2b2b;border:1px solid #1b1b1b;box-shadow:0 0 0 1px rgba(255,255,255,.04);"></div>
<svg style="left:430.60px;top:319.00px;" width="16.6" height="16.5" viewBox="0 0 16 16.500"><path d="M9.500 6c.4 2.300 1 2.900 3.300 3.300c-2.300 .4-2.900 1-3.300 3.300c-.4-2.300-1-2.900-3.300-3.300c2.300-.4 2.900-1 3.300-3.300z" fill="#e6e6e6"/><circle cx="3.500" cy="3" r="1.200" fill="#ddd"/><circle cx="9.800" cy="3" r="1.200" fill="#ddd"/><circle cx="3.500" cy="9" r="1.200" fill="#ddd"/><path d="M15.500 12v3.500h-3.500z" fill="#58c9a0"/></svg>
<div style="left:450.60px;top:318.60px;width:16.60px;height:16.90px;border-radius:4px;background:#2b2b2b;border:1px solid #1b1b1b;box-shadow:0 0 0 1px rgba(255,255,255,.04);"></div>
<svg style="left:450.60px;top:319.00px;" width="16.6" height="16.5" viewBox="0 0 16 16.500"><path d="M4 4 12 12.500M12 4 4 12.500" stroke="#d8d8d8" stroke-width="1"/></svg>
<div style="left:386.20px;top:318.60px;width:20.90px;height:16.90px;background:#2b2b2b;border-radius:4px;"></div>
<div style="left:396.30px;top:319.50px;width:0.70px;height:15.10px;background:#3a3a3a;"></div>
<svg style="left:388.00px;top:322.50px;" width="8" height="9" viewBox="0 0 8 9"><path d="M.5 4.500 3 1.500h4.500v6H3z" fill="#8a8a8a"/></svg>
<svg style="left:398.50px;top:322.50px;" width="8" height="9" viewBox="0 0 8 9"><path d="M7.500 4.500 5 1.500H.5v6H5z" fill="#d050f0"/></svg>
<div style="left:9.00px;top:341.00px;width:463.20px;height:20.00px;background:#4b4b4b;border-radius:3px;"></div>
<svg style="left:13.00px;top:345.50px;" width="11" height="11" viewBox="0 0 11 11"><circle cx="5.500" cy="5.500" r="4.300" fill="none" stroke="#747474" stroke-width="1.200"/></svg>
<div style="left:30.50px;top:343.20px;height:18px;line-height:18px;color:#dcdcdc;white-space:pre;font-family:'Liberation Sans',sans-serif;font-size:12px;letter-spacing:0.228px;">Amount</div>
<div style="left:6.00px;top:338.00px;width:1.00px;height:24.00px;background:#2fcf72;"></div>
<div style="left:176.50px;top:343.00px;width:97.50px;height:17.00px;background:#272727;border-radius:3px;"></div>
<div style="left:277.50px;top:343.00px;width:93.50px;height:17.00px;background:#272727;border-radius:3px;"></div>
<div style="left:181.00px;top:344.50px;height:16px;line-height:16px;color:#5a5a5a;white-space:pre;font-family:'Liberation Sans',sans-serif;font-size:10px;">X</div>
<div style="left:191.00px;top:343.50px;height:18px;line-height:18px;color:#cfcfcf;white-space:pre;font-family:'Liberation Sans',sans-serif;font-size:12px;">10.0</div>
<div style="left:283.00px;top:344.50px;height:16px;line-height:16px;color:#5a5a5a;white-space:pre;font-family:'Liberation Sans',sans-serif;font-size:10px;">Y</div>
<div style="left:293.00px;top:343.50px;height:18px;line-height:18px;color:#cfcfcf;white-space:pre;font-family:'Liberation Sans',sans-serif;font-size:12px;">10.0</div>
<div style="left:377.40px;top:343.00px;width:15.20px;height:17.00px;border-radius:4px;background:#2b2b2b;border:1px solid #1b1b1b;box-shadow:0 0 0 1px rgba(255,255,255,.04);"></div>
<svg style="left:380.00px;top:345.00px;" width="10" height="8" viewBox="0 0 10 8"><path d="M2 8v-3.500a3 3 0 0 1 6 0v3.500" fill="none" stroke="#d0d0d0" stroke-width="1.300"/></svg>
<div style="left:494.40px;top:85.00px;width:30.00px;height:500.00px;background:#414141;"></div>
<div style="left:503.50px;top:89.30px;width:1.50px;height:1.30px;background:#8a8a8a;"></div>
<div style="left:508.50px;top:89.30px;width:1.50px;height:1.30px;background:#8a8a8a;"></div>
<div style="left:513.50px;top:89.30px;width:1.50px;height:1.30px;background:#8a8a8a;"></div>
<div style="left:495.00px;top:96.00px;width:28.50px;height:27.50px;background:#1a1a1a;border-radius:4px;"></div>
<svg width="0" height="0" style="left:0;top:0"><defs><linearGradient id="tg" x1="0" y1="0" x2="0" y2="1"><stop offset="0" stop-color="#ececec"/><stop offset="1" stop-color="#cdcdcd"/></linearGradient></defs></svg>
<svg style="left:495.50px;top:96.50px;" width="27" height="27" viewBox="0 0 27 27"><path d="M7.500 4.500v15.500l4-3.500 2.500 5.500 2.500-1.200-2.500-5.300 5.200-.5z" fill="none" stroke="#2fcf72" stroke-width="1.500" stroke-linejoin="round"/></svg>
<svg style="left:495.50px;top:126.50px;" width="27" height="27" viewBox="0 0 27 27"><path d="M6 3v19l5.500-5 10.500-2z" fill="#e0e0e0"/></svg>
<svg style="left:495.50px;top:156.50px;" width="27" height="27" viewBox="0 0 27 27"><path d="M6.500 5 16 8.500l3 6-4.500 4.500-6-3z" fill="#e0e0e0"/><path d="M6.500 5 13 11.500" stroke="#3c3c3c" stroke-width="1.200"/><circle cx="13.500" cy="12" r="1.400" fill="#3c3c3c"/><path d="M16 20 20.500 15.500 22 17 17.500 21.500z" fill="#e0e0e0"/></svg>
<svg style="left:495.50px;top:186.50px;" width="27" height="27" viewBox="0 0 27 27"><path d="M4.500 21 6 17 17.500 5.500 20.500 8.500 9 20z" fill="#e0e0e0"/><path d="M18.500 4.500a2 2 0 0 1 3 3" fill="none" stroke="#e0e0e0" stroke-width="2"/><path d="M4 22 5 19l2 2z" fill="#e0e0e0"/></svg>
<svg style="left:495.50px;top:216.50px;" width="27" height="27" viewBox="0 0 27 27"><rect x="3.500" y="8" width="13.500" height="11" rx="1.500" fill="#e0e0e0"/><path d="M17.500 12 23.500 8.500v10l-6-3.500z" fill="#e0e0e0"/><rect x="5.500" y="5.500" width="8" height="1.600" fill="#e0e0e0"/><circle cx="7" cy="11.500" r="1.300" fill="#3c3c3c"/></svg>
<svg style="left:495.50px;top:246.50px;" width="27" height="27" viewBox="0 0 27 27"><path d="M5.500 21.500 21.500 5.500" stroke="#e0e0e0" stroke-width="1.100"/></svg>
<svg style="left:495.50px;top:276.50px;" width="27" height="27" viewBox="0 0 27 27"><path d="M6.500 5.500h14v3.500h-5v12.500h-4V9h-5z" fill="#e0e0e0"/></svg>
<svg style="left:495.50px;top:306.50px;" width="27" height="27" viewBox="0 0 27 27"><path d="M5 6l11 4-6.500 2.500-4.500 5.500z" fill="#e0e0e0"/><path d="M8 4.500h12l3 18h-19l1.500-5" fill="none" stroke="#e0e0e0" stroke-width="1" stroke-dasharray="2.200 1.800"/><rect x="3" y="21" width="2.500" height="2.500" fill="#e0e0e0"/><rect x="21.500" y="21" width="2.500" height="2.500" fill="#e0e0e0"/><rect x="18.800" y="3.300" width="2.500" height="2.500" fill="#e0e0e0"/></svg>
<svg style="left:495.50px;top:336.50px;" width="27" height="27" viewBox="0 0 27 27"><rect x="6.500" y="6.300" width="14" height="14" fill="url(#tg)"/></svg>
<svg style="left:495.50px;top:366.50px;" width="27" height="27" viewBox="0 0 27 27"><circle cx="13.500" cy="13" r="7.800" fill="url(#tg)"/></svg>
<svg style="left:495.50px;top:396.50px;" width="27" height="27" viewBox="0 0 27 27"><path d="M13.500 4.300 22 10.800 18.800 20.200h-10.600L5 10.800z" fill="url(#tg)"/></svg>
<svg style="left:495.50px;top:426.50px;" width="27" height="27" viewBox="0 0 27 27"><path d="M13.500 3.800 15.800 10.300h6.700l-5.400 4 2 6.500-5.600-4-5.600 4 2-6.500-5.400-4h6.700z" fill="url(#tg)"/></svg>
<svg style="left:495.50px;top:456.50px;" width="27" height="27" viewBox="0 0 27 27"><path d="M19.800 13.300A6.300 6.300 0 1 0 13.500 19.400" fill="none" stroke="#dcdcdc" stroke-width="3.300"/></svg>
<div style="left:508.30px;top:491.00px;width:1.50px;height:1.50px;background:#9a9a9a;border-radius:1px;"></div>
<div style="left:530.00px;top:85.00px;width:87.00px;height:22.50px;background:#3c3c3c;border-radius:3px 3px 0 0;"></div>
<div style="left:536.00px;top:87.50px;height:18px;line-height:18px;color:#dcdcdc;white-space:pre;font-family:'Liberation Sans',sans-serif;font-size:12px;letter-spacing:-0.102px;">Composition 4</div>
<div style="left:530.00px;top:107.00px;width:1057.00px;height:451.00px;background:#000;"></div>
<svg style="left:693.600px;top:127px;overflow:hidden" width="729.300" height="410" viewBox="0 0 729.300 410"><defs><filter id="vb" x="-30%" y="-30%" width="160%" height="160%"><feGaussianBlur stdDeviation="3.300"/></filter><filter id="vb2" x="-50%" y="-50%" width="200%" height="200%"><feGaussianBlur stdDeviation="5"/></filter><filter id="vt" x="-50%" y="-50%" width="200%" height="200%"><feGaussianBlur stdDeviation="2.100"/></filter></defs><rect x="0" y="0" width="729.300" height="410" fill="#00aeff"/><circle cx="465.6" cy="103.7" r="19" fill="#55a0ff" fill-opacity="0.85" filter="url(#vb2)"/><circle cx="465.6" cy="103.7" r="3.500" fill="#cfe4ff" fill-opacity=".7" filter="url(#vt)"/><circle cx="345.2" cy="164.3" r="17" fill="#55a0ff" fill-opacity="0.8" filter="url(#vb2)"/><circle cx="345.2" cy="164.3" r="3.500" fill="#cfe4ff" fill-opacity=".7" filter="url(#vt)"/><circle cx="276.7" cy="217.9" r="18" fill="#55a0ff" fill-opacity="0.8" filter="url(#vb2)"/><circle cx="276.7" cy="217.9" r="3.500" fill="#cfe4ff" fill-opacity=".7" filter="url(#vt)"/><circle cx="228.8" cy="275.7" r="22.5" fill="#4dfab0" fill-opacity="1" filter="url(#vb)"/><circle cx="248.5" cy="244.7" r="25" fill="#4dfab0" fill-opacity="1" filter="url(#vb)"/><ellipse cx="248.5" cy="244.7" rx="3.500" ry="1.800" fill="#fff" fill-opacity=".35" filter="url(#vt)"/><circle cx="424.7" cy="120.1" r="20" fill="#ffd04d" fill-opacity="1" filter="url(#vb)"/><ellipse cx="424.7" cy="120.1" rx="3.500" ry="1.800" fill="#fff" fill-opacity=".35" filter="url(#vt)"/><circle cx="383.9" cy="141.5" r="19.5" fill="#b0ea88" fill-opacity="1" filter="url(#vb)"/><ellipse cx="383.9" cy="141.5" rx="3.500" ry="1.800" fill="#fff" fill-opacity=".35" filter="url(#vt)"/><circle cx="309.2" cy="191.3" r="20" fill="#ff744d" fill-opacity="1" filter="url(#vb)"/><ellipse cx="309.2" cy="191.3" rx="3.500" ry="1.800" fill="#fff" fill-opacity=".35" filter="url(#vt)"/><circle cx="250.0" cy="294.0" r="36.6" fill="#ff744d" fill-opacity="1" filter="url(#vb)"/><text x="251.4" y="304.0" font-family="Liberation Sans" font-weight="bold" font-size="27" fill="#fff" fill-opacity="0.62" text-anchor="middle" filter="url(#vt)" transform="rotate(0 251.4 304.0)">10</text><circle cx="306.3" cy="287.0" r="44" fill="#6755ff" fill-opacity="1" filter="url(#vb)"/><text x="305.4" y="296.0" font-family="Liberation Sans" font-weight="bold" font-size="29" fill="#fff" fill-opacity="0.6" text-anchor="middle" filter="url(#vt)" transform="rotate(-8 305.4 296.0)">9</text><circle cx="499.4" cy="94.0" r="24.5" fill="#ff4dc0" fill-opacity="1" filter="url(#vb)"/><circle cx="530.4" cy="95.3" r="31.5" fill="#ffd04d" fill-opacity="1" filter="url(#vb)"/><circle cx="531.8" cy="127.7" r="38.5" fill="#d67fd6" fill-opacity="1" filter="url(#vb)"/><text x="533.9" y="137.0" font-family="Liberation Sans" font-weight="bold" font-size="24" fill="#fff" fill-opacity="0.62" text-anchor="middle" filter="url(#vt)" transform="rotate(-5 533.9 137.0)">12</text><circle cx="486.2" cy="180.4" r="45.5" fill="#4466dd" fill-opacity="1" filter="url(#vb)"/><text x="480.9" y="191.0" font-family="Liberation Sans" font-weight="bold" font-size="32" fill="#fff" fill-opacity="0.55" text-anchor="middle" filter="url(#vt)" transform="rotate(-12 480.9 191.0)">1</text><circle cx="397.9" cy="243.3" r="48.5" fill="#d67fd6" fill-opacity="1" filter="url(#vb)"/><text x="397.4" y="253.0" font-family="Liberation Sans" font-weight="bold" font-size="31" fill="#fff" fill-opacity="0.62" text-anchor="middle" filter="url(#vt)" transform="rotate(-8 397.4 253.0)">5</text></svg>
<div style="left:569.40px;top:458.60px;height:18px;line-height:18px;color:#f0f0f0;white-space:pre;font-family:'Liberation Sans',sans-serif;font-size:12px;letter-spacing:-0.406px;-webkit-text-stroke:0.350px currentColor;">Hold S</div>
<div style="left:605.30px;top:458.60px;height:18px;line-height:18px;color:#5a5a5a;white-space:pre;font-family:'Liberation Sans',sans-serif;font-size:12px;letter-spacing:-0.114px;">Direct Layer Selection</div>
<div style="left:569.40px;top:472.60px;height:18px;line-height:18px;color:#f0f0f0;white-space:pre;font-family:'Liberation Sans',sans-serif;font-size:12px;letter-spacing:-0.908px;-webkit-text-stroke:0.350px currentColor;">Space</div>
<div style="left:602.80px;top:472.60px;height:18px;line-height:18px;color:#5a5a5a;white-space:pre;font-family:'Liberation Sans',sans-serif;font-size:12px;letter-spacing:-0.189px;">Play/ Stop</div>
<div style="left:563.00px;top:486.70px;height:18px;line-height:18px;color:#f0f0f0;white-space:pre;font-family:'Liberation Sans',sans-serif;font-size:12px;letter-spacing:0.097px;-webkit-text-stroke:0.350px currentColor;">S + Left click + drag</div>
<div style="left:673.50px;top:486.70px;height:18px;line-height:18px;color:#5a5a5a;white-space:pre;font-family:'Liberation Sans',sans-serif;font-size:12px;letter-spacing:-1.330px;">Pan</div>
<div style="left:536.00px;top:500.70px;height:18px;line-height:18px;color:#f0f0f0;white-space:pre;font-family:'Liberation Sans',sans-serif;font-size:12px;letter-spacing:0.143px;-webkit-text-stroke:0.350px currentColor;">Ctrl + Left click + drag</div>
<div style="left:658.40px;top:500.70px;height:18px;line-height:18px;color:#5a5a5a;white-space:pre;font-family:'Liberation Sans',sans-serif;font-size:12px;letter-spacing:0.024px;">Move Pivot Point</div>
<div style="left:594.00px;top:514.80px;height:18px;line-height:18px;color:#5a5a5a;white-space:pre;font-family:'Liberation Sans',sans-serif;font-size:12px;letter-spacing:-0.405px;">Disable Snapping</div>
<div style="left:694px;top:455px;width:100px;height:80px;overflow:hidden">
<div style="left:-88.70px;top:3.60px;height:18px;line-height:18px;color:#5b6fc2;white-space:pre;font-family:'Liberation Sans',sans-serif;font-size:12px;letter-spacing:-0.114px;">Direct Layer Selection</div>
<div style="left:-35.60px;top:45.70px;height:18px;line-height:18px;color:#5b6fc2;white-space:pre;font-family:'Liberation Sans',sans-serif;font-size:12px;letter-spacing:0.024px;">Move Pivot Point</div>
</div>
<div style="left:998.00px;top:534.70px;height:18px;line-height:18px;color:#f2f2f2;white-space:pre;font-family:'Liberation Sans',sans-serif;font-size:12px;letter-spacing:0.095px;">Viewport Quality: High</div>
<div style="left:530.00px;top:558.00px;width:1057.00px;height:22.00px;background:#3c3c3c;"></div>
<div style="left:866.00px;top:559.30px;width:100.00px;height:19.30px;border-radius:4px;background:#2b2b2b;border:1px solid #1b1b1b;box-shadow:0 0 0 1px rgba(255,255,255,.04);"></div>
<svg style="left:867.00px;top:561.00px;" width="16" height="16" viewBox="0 0 16 16"><path d="M3 3v10" stroke="#d6d6d6" stroke-width="1.800"/><path d="M13 3v10L5 8z" fill="#d6d6d6"/></svg>
<svg style="left:887.20px;top:561.00px;" width="16" height="16" viewBox="0 0 16 16"><path d="M9.500 3v10L2.500 8z" fill="#d6d6d6"/><path d="M12 3v10" stroke="#d6d6d6" stroke-width="1.800"/></svg>
<div style="left:885.60px;top:560.30px;width:1.00px;height:17.30px;background:#1f1f1f;"></div>
<svg style="left:907.40px;top:561.00px;" width="16" height="16" viewBox="0 0 16 16"><path d="M4 2.500v11L13.500 8z" fill="#d6d6d6"/></svg>
<div style="left:905.60px;top:560.30px;width:1.00px;height:17.30px;background:#1f1f1f;"></div>
<svg style="left:927.60px;top:561.00px;" width="16" height="16" viewBox="0 0 16 16"><path d="M4 3v10" stroke="#d6d6d6" stroke-width="1.800"/><path d="M6.500 3v10L13.500 8z" fill="#d6d6d6"/></svg>
<div style="left:925.60px;top:560.30px;width:1.00px;height:17.30px;background:#1f1f1f;"></div>
<svg style="left:947.80px;top:561.00px;" width="16" height="16" viewBox="0 0 16 16"><path d="M3 3v10l8-5z" fill="#d6d6d6"/><path d="M13 3v10" stroke="#d6d6d6" stroke-width="1.800"/></svg>
<div style="left:945.60px;top:560.30px;width:1.00px;height:17.30px;background:#1f1f1f;"></div>
<div style="left:971.40px;top:559.30px;width:19.20px;height:19.30px;border-radius:4px;background:#2b2b2b;border:1px solid #1b1b1b;box-shadow:0 0 0 1px rgba(255,255,255,.04);"></div>
<svg style="left:973.00px;top:561.00px;" width="16" height="16" viewBox="0 0 16 16"><path d="M2 12.500v-7.500h8.500" fill="none" stroke="#d6d6d6" stroke-width="1.500"/><path d="M2 12.500h12v-5" fill="none" stroke="#d6d6d6" stroke-width="1.500"/><path d="M9 1.500 13 5 9 8.500z" fill="#d6d6d6"/></svg>
<div style="left:1232.00px;top:559.50px;width:36.70px;height:18.70px;background:#2b2b2b;border-radius:4px;"></div>
<svg style="left:1235.00px;top:563.00px;" width="14" height="11" viewBox="0 0 14 11"><path d="M4.500 1h9v9h-9L.5 5.500z" fill="#d6d6d6"/><circle cx="5.300" cy="5.500" r="1.400" fill="#2b2b2b"/></svg>
<div style="left:1258.00px;top:560.50px;height:18px;line-height:18px;color:#9a9a9a;white-space:pre;font-family:'Liberation Sans',sans-serif;font-size:12px;">0</div>
<div style="left:1272.00px;top:559.50px;width:31.00px;height:18.70px;border-radius:4px;background:#2b2b2b;border:1px solid #1b1b1b;box-shadow:0 0 0 1px rgba(255,255,255,.04);"></div>
<svg style="left:1273.50px;top:561.00px;" width="16" height="16" viewBox="0 0 16 16"><path d="M1.500 6h3l4-3.500v11l-4-3.500h-3z" fill="#2fcf72"/><path d="M10.500 5.500a3.500 3.500 0 0 1 0 5M12.300 3.500a6 6 0 0 1 0 9" fill="none" stroke="#2fcf72" stroke-width="1.200"/></svg>
<div style="left:1291.30px;top:560.50px;width:0.70px;height:16.70px;background:#3c3c3c;"></div>
<svg style="left:1294.00px;top:565.30px;" width="7" height="8" viewBox="0 0 7 8"><path d="M.8 .8 6 3.800 .8 6.800z" fill="none" stroke="#7c7c7c" stroke-width="1"/></svg>
<div style="left:1307.00px;top:559.50px;width:31.00px;height:18.70px;border-radius:4px;background:#2b2b2b;border:1px solid #1b1b1b;box-shadow:0 0 0 1px rgba(255,255,255,.04);"></div>
<div style="left:1308.00px;top:560.50px;width:18.30px;height:16.70px;background:#414141;border-radius:3px 0 0 3px;"></div>
<svg style="left:1308.50px;top:561.00px;" width="16" height="16" viewBox="0 0 16 16"></svg>
<div style="left:1326.30px;top:560.50px;width:0.70px;height:16.70px;background:#3c3c3c;"></div>
<svg style="left:1329.00px;top:565.30px;" width="7" height="8" viewBox="0 0 7 8"><path d="M.8 .8 6 3.800 .8 6.800z" fill="none" stroke="#7c7c7c" stroke-width="1"/></svg>
<svg style="left:0;top:0;pointer-events:none;" width="1920" height="1029" viewBox="0 0 1920 1029"><path d="M1322.300 568.900 1319.200 565.700a3.900 3.900 0 0 0-5.600 5.600L1316.700 574.400" fill="none" stroke="#d0d0d0" stroke-width="2.3" /><path d="M1321.400 568 1323.100 569.700M1315.800 573.500 1317.500 575.200" fill="none" stroke="#f4f4f4" stroke-width="2.3" /></svg>
<div style="left:1342.00px;top:559.50px;width:31.00px;height:18.70px;border-radius:4px;background:#2b2b2b;border:1px solid #1b1b1b;box-shadow:0 0 0 1px rgba(255,255,255,.04);"></div>
<div style="left:1343.00px;top:560.50px;width:18.30px;height:16.70px;background:#414141;border-radius:3px 0 0 3px;"></div>
<svg style="left:1343.50px;top:561.00px;" width="16" height="16" viewBox="0 0 16 16"><path d="M5.500 1.500v13M10.500 1.500v13M1.500 5.500h13M1.500 10.500h13" stroke="#d6d6d6" stroke-width="1.200"/></svg>
<div style="left:1361.30px;top:560.50px;width:0.70px;height:16.70px;background:#3c3c3c;"></div>
<svg style="left:1364.00px;top:565.30px;" width="7" height="8" viewBox="0 0 7 8"><path d="M.8 .8 6 3.800 .8 6.800z" fill="none" stroke="#7c7c7c" stroke-width="1"/></svg>
<div style="left:1376.80px;top:559.50px;width:20.20px;height:18.70px;border-radius:4px;background:#2b2b2b;border:1px solid #1b1b1b;box-shadow:0 0 0 1px rgba(255,255,255,.04);"></div>
<svg style="left:0;top:0;pointer-events:none;" width="1920" height="1029" viewBox="0 0 1920 1029"><rect x="1380.10" y="564.60" width="3.90" height="3.90" fill="#2fcf72" /><rect x="1386.400" y="565.100" width="7.700" height="2.900" fill="none" stroke="#2fcf72" stroke-width="1"/><rect x="1380.10" y="570.00" width="14.50" height="3.80" fill="#2fcf72" /></svg>
<div style="left:1400.00px;top:559.50px;width:20.00px;height:18.70px;border-radius:4px;background:#2b2b2b;border:1px solid #1b1b1b;box-shadow:0 0 0 1px rgba(255,255,255,.04);"></div>
<div style="left:1401.00px;top:560.50px;width:18.00px;height:16.70px;background:#414141;border-radius:3px;"></div>
<svg style="left:1402.00px;top:561.00px;" width="16" height="16" viewBox="0 0 16 16"><path d="M1 3.500h2.200l3.300 4.500-3.300 4.500H1L4.300 8zM5.500 3.500h2.200l3.300 4.500-3.300 4.500H5.500L8.800 8zM10 3.500h2.200l3.300 4.500-3.300 4.500H10L13.300 8z" fill="#d4d4d4"/></svg>
<div style="left:1423.00px;top:559.50px;width:31.40px;height:18.70px;border-radius:4px;background:#2b2b2b;border:1px solid #1b1b1b;box-shadow:0 0 0 1px rgba(255,255,255,.04);"></div>
<div style="left:1424.00px;top:560.50px;width:18.30px;height:16.70px;background:#414141;border-radius:3px 0 0 3px;"></div>
<svg style="left:1424.50px;top:561.00px;" width="16" height="16" viewBox="0 0 16 16"><rect x="1.500" y="2.500" width="13" height="10" fill="none" stroke="#d6d6d6" stroke-width="1.300"/><rect x="2" y="10" width="12" height="2.500" fill="#d6d6d6"/></svg>
<div style="left:1442.30px;top:560.50px;width:0.70px;height:16.70px;background:#3c3c3c;"></div>
<svg style="left:1445.00px;top:565.30px;" width="7" height="8" viewBox="0 0 7 8"><path d="M.8 .8 6 3.800 .8 6.800z" fill="none" stroke="#7c7c7c" stroke-width="1"/></svg>
<div style="left:1458.00px;top:559.50px;width:31.00px;height:18.70px;border-radius:4px;background:#2b2b2b;border:1px solid #1b1b1b;box-shadow:0 0 0 1px rgba(255,255,255,.04);"></div>
<div style="left:1459.00px;top:560.50px;width:18.30px;height:16.70px;background:#414141;border-radius:3px 0 0 3px;"></div>
<svg style="left:1459.50px;top:561.00px;" width="16" height="16" viewBox="0 0 16 16"><rect x="1.500" y="2" width="8" height="6" fill="none" stroke="#9a9a9a" stroke-width="1"/><rect x="4" y="4.500" width="8" height="6" fill="#414141" stroke="#9a9a9a" stroke-width="1"/><rect x="6.500" y="7" width="8" height="6" fill="#414141" stroke="#9a9a9a" stroke-width="1"/></svg>
<div style="left:1477.30px;top:560.50px;width:0.70px;height:16.70px;background:#3c3c3c;"></div>
<svg style="left:1480.00px;top:565.30px;" width="7" height="8" viewBox="0 0 7 8"><path d="M.8 .8 6 3.800 .8 6.800z" fill="none" stroke="#7c7c7c" stroke-width="1"/></svg>
<div style="left:1493.00px;top:559.50px;width:31.00px;height:18.70px;border-radius:4px;background:#2b2b2b;border:1px solid #1b1b1b;box-shadow:0 0 0 1px rgba(255,255,255,.04);"></div>
<div style="left:1494.00px;top:560.50px;width:18.30px;height:16.70px;background:#414141;border-radius:3px 0 0 3px;"></div>
<svg style="left:1494.50px;top:561.00px;" width="16" height="16" viewBox="0 0 16 16"><rect x="1.500" y="2" width="8.500" height="8.500" fill="#9a9a9a"/><rect x="6" y="6" width="8.500" height="8.500" fill="#414141" stroke="#d6d6d6" stroke-width="1.200"/></svg>
<div style="left:1512.30px;top:560.50px;width:0.70px;height:16.70px;background:#3c3c3c;"></div>
<svg style="left:1515.00px;top:565.30px;" width="7" height="8" viewBox="0 0 7 8"><path d="M.8 .8 6 3.800 .8 6.800z" fill="none" stroke="#7c7c7c" stroke-width="1"/></svg>
<div style="left:1528.00px;top:559.50px;width:31.00px;height:18.70px;border-radius:4px;background:#2b2b2b;border:1px solid #1b1b1b;box-shadow:0 0 0 1px rgba(255,255,255,.04);"></div>
<svg style="left:1529.50px;top:561.00px;" width="16" height="16" viewBox="0 0 16 16"><rect x="1.5" y="1.5" width="3.300" height="3.300" fill="#2fcf72"/><rect x="1.5" y="8.1" width="3.300" height="3.300" fill="#2fcf72"/><rect x="4.8" y="4.8" width="3.300" height="3.300" fill="#2fcf72"/><rect x="4.8" y="11.399999999999999" width="3.300" height="3.300" fill="#2fcf72"/><rect x="8.1" y="1.5" width="3.300" height="3.300" fill="#2fcf72"/><rect x="8.1" y="8.1" width="3.300" height="3.300" fill="#2fcf72"/><rect x="11.399999999999999" y="4.8" width="3.300" height="3.300" fill="#2fcf72"/><rect x="11.399999999999999" y="11.399999999999999" width="3.300" height="3.300" fill="#2fcf72"/></svg>
<div style="left:1547.30px;top:560.50px;width:0.70px;height:16.70px;background:#3c3c3c;"></div>
<svg style="left:1550.00px;top:565.30px;" width="7" height="8" viewBox="0 0 7 8"><path d="M.8 .8 6 3.800 .8 6.800z" fill="none" stroke="#7c7c7c" stroke-width="1"/></svg>
<div style="left:1563.00px;top:559.50px;width:19.70px;height:18.70px;border-radius:4px;background:#2b2b2b;border:1px solid #1b1b1b;box-shadow:0 0 0 1px rgba(255,255,255,.04);"></div>
<svg style="left:1565.00px;top:561.00px;" width="16" height="16" viewBox="0 0 16 16"><rect x="6.800" y="1" width="2.400" height="14" fill="#d6d6d6" transform="rotate(0 8 8)"/><rect x="6.800" y="1" width="2.400" height="14" fill="#d6d6d6" transform="rotate(45 8 8)"/><rect x="6.800" y="1" width="2.400" height="14" fill="#d6d6d6" transform="rotate(90 8 8)"/><rect x="6.800" y="1" width="2.400" height="14" fill="#d6d6d6" transform="rotate(135 8 8)"/><circle cx="8" cy="8" r="4.800" fill="#d6d6d6"/><circle cx="8" cy="8" r="2.400" fill="#2b2b2b"/></svg>
<div style="left:1593.00px;top:85.00px;width:40.00px;height:22.50px;background:#464646;border-radius:3px 3px 0 0;"></div>
<div style="left:1598.00px;top:87.50px;height:18px;line-height:18px;color:#dcdcdc;white-space:pre;font-family:'Liberation Sans',sans-serif;font-size:12px;letter-spacing:0.078px;">Color</div>
<div style="left:1633.50px;top:85.00px;width:69.20px;height:22.00px;background:#2a2a2a;border-radius:3px 3px 0 0;"></div>
<div style="left:1639.00px;top:87.50px;height:18px;line-height:18px;color:#dcdcdc;white-space:pre;font-family:'Liberation Sans',sans-serif;font-size:12px;letter-spacing:-0.245px;">Add Layers</div>
<div style="left:1593.00px;top:107.00px;width:320.70px;height:376.70px;background:#464646;"></div>
<div style="left:1900.60px;top:107.00px;width:13.10px;height:376.70px;background:#2b2b2b;"></div>
<div style="left:1902.30px;top:153.40px;width:9.30px;height:302.30px;background:#505050;border-radius:5px;"></div>
<div style="left:1593px;top:107px;width:307px;height:160px;overflow:hidden"><div style="left:53px;top:-47.400000000000006px;width:200px;height:200px;border-radius:50%;background:conic-gradient(from 90deg,#ff0000,#ff00ff,#0000ff,#00ffff,#00ff00,#ffff00,#ff0000);-webkit-mask:radial-gradient(circle closest-side,transparent 74.300%,#000 75.300%,#000 99.200%,transparent 100%);mask:radial-gradient(circle closest-side,transparent 74.300%,#000 75.300%,#000 99.200%,transparent 100%);"></div></div>
<div style="left:1702.00px;top:116.00px;width:90.00px;height:90.00px;background:linear-gradient(to right,#000,rgba(0,0,0,0)),linear-gradient(to bottom,#fff,#2200ff);"></div>
<svg style="left:1784.80px;top:169.10px;" width="14" height="14" viewBox="0 0 14 14"><circle cx="7" cy="7" r="5.800" fill="none" stroke="#f0f0f0" stroke-width="1.100"/></svg>
<svg style="left:1703.70px;top:232.60px;" width="14" height="14" viewBox="0 0 14 14"><circle cx="7" cy="7" r="5.800" fill="none" stroke="#f0f0f0" stroke-width="1.100"/></svg>
<div style="left:1600.00px;top:273.00px;width:22.00px;height:22.00px;background:#6755ff;border-radius:3px;"></div>
<div style="left:1625.50px;top:275.60px;height:18px;line-height:18px;color:#dcdcdc;white-space:pre;font-family:'Liberation Sans',sans-serif;font-size:12px;letter-spacing:-0.104px;">Medium Slateblue</div>
<div style="left:1871.20px;top:273.20px;width:21.80px;height:21.50px;background:#242424;border-radius:4px;border:1px solid #3a3a3a;"></div>
<svg style="left:1875.00px;top:277.00px;" width="14" height="14" viewBox="0 0 14 14"><path d="M1.500 12.500 2.500 10 8 4.500 9.500 6 4 11.500z" fill="#9a9a9a"/><path d="M7.500 3 11 6.500" stroke="#e6e6e6" stroke-width="1.800"/><path d="M9 4.500 11 2a1.500 1.500 0 0 1 2.100 2.100L10.500 6z" fill="#e6e6e6"/></svg>
<div style="left:1600.00px;top:300.50px;width:49.50px;height:17.00px;border-radius:3px;background:#464646;border:1px solid #5c5c5c;"></div>
<div style="left:1603.50px;top:300.90px;height:18px;line-height:18px;color:#dcdcdc;white-space:pre;font-family:'Liberation Sans',sans-serif;font-size:12px;letter-spacing:-0.422px;">Hex</div>
<svg style="left:1636.50px;top:307.00px;" width="9" height="5" viewBox="0 0 9 5"><path d="M.5 .5 4.5 4.5 8.5 .5" fill="none" stroke="#cfcfcf" stroke-width="1.100"/></svg>
<div style="left:1653.30px;top:298.00px;width:239.70px;height:21.60px;background:#262626;border-radius:3px;"></div>
<div style="left:1658.00px;top:300.80px;height:17px;line-height:17px;color:#555;white-space:pre;font-family:'Liberation Sans',sans-serif;font-size:11px;">#</div>
<div style="left:1670.00px;top:300.90px;height:18px;line-height:18px;color:#dcdcdc;white-space:pre;font-family:'Liberation Sans',sans-serif;font-size:12px;letter-spacing:0.569px;">6755ff</div>
<div style="left:1600.00px;top:329.80px;width:234.00px;height:4.40px;background:#e4e4e4;border-radius:2.2px;"></div>
<svg style="left:1828.00px;top:326.00px;" width="12" height="12" viewBox="0 0 12 12"><circle cx="6" cy="6" r="5.600" fill="#7bcfb5"/><circle cx="6" cy="6" r="2" fill="#56a890"/></svg>
<div style="left:1849.00px;top:324.50px;width:44.00px;height:15.50px;background:#262626;border-radius:3px;"></div>
<div style="left:1853.00px;top:323.75px;height:17.5px;line-height:17.5px;color:#585858;white-space:pre;font-family:'Liberation Sans',sans-serif;font-size:11.5px;">A</div>
<div style="left:1866.00px;top:323.50px;height:18px;line-height:18px;color:#dcdcdc;white-space:pre;font-family:'Liberation Sans',sans-serif;font-size:12px;letter-spacing:0.234px;">255</div>
<div style="left:1597.00px;top:346.40px;width:299.00px;height:21.60px;background:#1d1d1d;"></div>
<div style="left:1599.00px;top:348.50px;width:148.00px;height:19.50px;background:#3e3e3e;border-radius:4px 4px 0 0;"></div>
<div style="left:1648.00px;top:349.20px;height:18px;line-height:18px;color:#dcdcdc;white-space:pre;font-family:'Liberation Sans',sans-serif;font-size:12px;letter-spacing:-0.290px;">Swatches</div>
<div style="left:1793.15px;top:349.20px;height:18px;line-height:18px;color:#a8a8a8;white-space:pre;font-family:'Liberation Sans',sans-serif;font-size:12px;letter-spacing:0.059px;">Generator</div>
<div style="left:1598.40px;top:371.20px;width:256.60px;height:17.50px;background:#585858;border-radius:4px;"></div>
<div style="left:1599.00px;top:372.30px;width:62.00px;height:15.20px;background:#1d1d1d;border-radius:3px;"></div>
<svg style="left:1605.50px;top:374.50px;" width="12" height="11" viewBox="0 0 12 11"><path d="M1.500 .5v10M5 .5v10" stroke="#2fcf72" stroke-width="1.800"/><path d="M7.500 .8 10.500 10.200" stroke="#2fcf72" stroke-width="1.800"/></svg>
<div style="left:1621.00px;top:371.90px;height:18px;line-height:18px;color:#dcdcdc;white-space:pre;font-family:'Liberation Sans',sans-serif;font-size:12px;letter-spacing:0.135px;">Library</div>
<svg style="left:1670.50px;top:374.00px;" width="12" height="12" viewBox="0 0 12 12"><path d="M1 1.500h4.500l1 1.500h4.500v8h-10z" fill="none" stroke="#d8d8d8" stroke-width="1.100"/><path d="M2.800 5.800h1.200M5.500 5.800h4M2.800 8.200h1.200M5.500 8.200h4" stroke="#d8d8d8" stroke-width="1"/></svg>
<div style="left:1686.60px;top:371.90px;height:18px;line-height:18px;color:#dcdcdc;white-space:pre;font-family:'Liberation Sans',sans-serif;font-size:12px;letter-spacing:0.023px;">Project</div>
<svg style="left:1737.50px;top:374.00px;" width="10" height="12" viewBox="0 0 10 12"><path d="M1 .8h5l3 3v7.500h-8z" fill="none" stroke="#d8d8d8" stroke-width="1.100"/><path d="M6 .8v3h3" fill="none" stroke="#d8d8d8" stroke-width="1"/></svg>
<div style="left:1751.90px;top:371.90px;height:18px;line-height:18px;color:#dcdcdc;white-space:pre;font-family:'Liberation Sans',sans-serif;font-size:12px;letter-spacing:-0.633px;">Scene</div>
<svg style="left:1800.50px;top:374.00px;" width="12" height="12" viewBox="0 0 12 12"><path d="M3.500 1h5a2.500 2.500 0 0 1 2.500 2.500v2.500l-5 5h-2.500a2.500 2.500 0 0 1-2.500-2.500v-5a2.500 2.500 0 0 1 2.500-2.500z" fill="none" stroke="#d8d8d8" stroke-width="1.100"/><path d="M11 6h-3a2 2 0 0 0-2 2v3" fill="none" stroke="#d8d8d8" stroke-width="1"/></svg>
<div style="left:1816.20px;top:371.90px;height:18px;line-height:18px;color:#dcdcdc;white-space:pre;font-family:'Liberation Sans',sans-serif;font-size:12px;letter-spacing:-0.475px;">Labels</div>
<div style="left:1858.60px;top:371.20px;width:36.70px;height:17.50px;background:#585858;border-radius:4px;"></div>
<div style="left:1859.30px;top:372.30px;width:15.70px;height:15.20px;background:#1d1d1d;border-radius:3px;"></div>
<svg style="left:1862.00px;top:374.50px;" width="11" height="11" viewBox="0 0 11 11"><rect x=".5" y=".5" width="4" height="4" rx=".8" fill="#2fcf72"/><rect x="6.300" y=".5" width="4" height="4" rx=".8" fill="#2fcf72"/><rect x=".5" y="6.300" width="4" height="4" rx=".8" fill="#2fcf72"/><rect x="6.300" y="6.300" width="4" height="4" rx=".8" fill="#2fcf72"/></svg>
<svg style="left:1880.50px;top:375.00px;" width="11" height="10" viewBox="0 0 11 10"><path d="M0 1.500h11M0 5h11M0 8.500h11" stroke="#dcdcdc" stroke-width="1.100"/></svg>
<div style="left:1598.40px;top:392.70px;width:275.10px;height:16.70px;border-radius:3px;background:#444;border:1px solid #585858;"></div>
<div style="left:1601.00px;top:393.00px;height:18px;line-height:18px;color:#dcdcdc;white-space:pre;font-family:'Liberation Sans',sans-serif;font-size:12px;letter-spacing:-0.508px;">new</div>
<svg style="left:1860.50px;top:399.00px;" width="9" height="5" viewBox="0 0 9 5"><path d="M.5 .5 4.5 4.5 8.5 .5" fill="none" stroke="#cfcfcf" stroke-width="1.100"/></svg>
<div style="left:1880.00px;top:400.50px;width:2.00px;height:2.00px;background:#dcdcdc;"></div>
<div style="left:1885.00px;top:400.50px;width:2.00px;height:2.00px;background:#dcdcdc;"></div>
<div style="left:1890.00px;top:400.50px;width:2.00px;height:2.00px;background:#dcdcdc;"></div>
<div style="left:1597.90px;top:410.20px;width:297.40px;height:73.50px;background:#262626;"></div>
<div style="left:1600.00px;top:412.00px;width:18.00px;height:18.00px;background:#9a50ff;border-radius:3.5px;"></div>
<div style="left:1622.03px;top:412.00px;width:18.00px;height:18.00px;background:#4a9cff;border-radius:3.5px;"></div>
<div style="left:1644.06px;top:412.00px;width:18.00px;height:18.00px;background:#ff744d;border-radius:3.5px;"></div>
<div style="left:1666.09px;top:412.00px;width:18.00px;height:18.00px;background:#4dfab0;border-radius:3.5px;"></div>
<div style="left:1688.12px;top:412.00px;width:18.00px;height:18.00px;background:#ff4a5a;border-radius:3.5px;"></div>
<div style="left:1710.15px;top:412.00px;width:18.00px;height:18.00px;background:#ff4dc0;border-radius:3.5px;"></div>
<div style="left:1732.18px;top:412.00px;width:18.00px;height:18.00px;background:#ffd04d;border-radius:3.5px;"></div>
<div style="left:1754.21px;top:412.00px;width:18.00px;height:18.00px;background:#4466dd;border-radius:3.5px;"></div>
<div style="left:1776.24px;top:412.00px;width:18.00px;height:18.00px;background:#5ce6d8;border-radius:3.5px;"></div>
<div style="left:1798.27px;top:412.00px;width:18.00px;height:18.00px;background:#d67fd6;border-radius:3.5px;"></div>
<div style="left:1820.30px;top:412.00px;width:18.00px;height:18.00px;background:#b0ea88;border-radius:3.5px;"></div>
<div style="left:1842.33px;top:412.00px;width:18.00px;height:18.00px;background:#6755ff;border-radius:3.5px;"></div>
<div style="left:1593.00px;top:490.20px;width:38.00px;height:21.80px;background:#464646;border-radius:3px 3px 0 0;"></div>
<div style="left:1598.50px;top:492.80px;height:18px;line-height:18px;color:#dcdcdc;white-space:pre;font-family:'Liberation Sans',sans-serif;font-size:12px;letter-spacing:0.078px;">Align</div>
<div style="left:1593.00px;top:511.70px;width:320.70px;height:68.30px;background:#464646;"></div>
<div style="left:1601.00px;top:522.90px;height:18px;line-height:18px;color:#dcdcdc;white-space:pre;font-family:'Liberation Sans',sans-serif;font-size:12px;letter-spacing:0.078px;">Alignment</div>
<div style="left:1601.00px;top:550.90px;height:18px;line-height:18px;color:#dcdcdc;white-space:pre;font-family:'Liberation Sans',sans-serif;font-size:12px;letter-spacing:0.361px;">Distribution</div>
<div style="left:1790.30px;top:522.60px;width:53.50px;height:16.80px;background:#242424;border-radius:4px;border:1px solid #3c3c3c;"></div>
<svg style="left:1792.70px;top:524.50px;" width="13" height="13" viewBox="0 0 13 13"><path d="M1 0v13" stroke="#ececec" stroke-width="1.200"/><path d="M3.500 4h5.500M3.500 9h9" stroke="#ececec" stroke-width="2"/></svg>
<div style="left:1808.10px;top:523.60px;width:0.70px;height:14.80px;background:#444;"></div>
<svg style="left:1810.50px;top:524.50px;" width="13" height="13" viewBox="0 0 13 13"><path d="M6.500 0v13" stroke="#ececec" stroke-width="1.200"/><path d="M2.500 4h8M1 9h11" stroke="#ececec" stroke-width="2"/></svg>
<div style="left:1825.90px;top:523.60px;width:0.70px;height:14.80px;background:#444;"></div>
<svg style="left:1828.30px;top:524.50px;" width="13" height="13" viewBox="0 0 13 13"><path d="M12 0v13" stroke="#ececec" stroke-width="1.200"/><path d="M4 4h5.500M.5 9h9" stroke="#ececec" stroke-width="2"/></svg>
<div style="left:1852.20px;top:522.60px;width:53.50px;height:16.80px;background:#242424;border-radius:4px;border:1px solid #3c3c3c;"></div>
<svg style="left:1854.60px;top:524.50px;" width="13" height="13" viewBox="0 0 13 13"><path d="M0 1h13" stroke="#ececec" stroke-width="1.200"/><path d="M4 3.500v9M9 3.500v5.500" stroke="#ececec" stroke-width="2"/></svg>
<div style="left:1870.00px;top:523.60px;width:0.70px;height:14.80px;background:#444;"></div>
<svg style="left:1872.40px;top:524.50px;" width="13" height="13" viewBox="0 0 13 13"><path d="M0 6.500h13" stroke="#ececec" stroke-width="1.200"/><path d="M4 1v11M9 2.500v8" stroke="#ececec" stroke-width="2"/></svg>
<div style="left:1887.80px;top:523.60px;width:0.70px;height:14.80px;background:#444;"></div>
<svg style="left:1890.20px;top:524.50px;" width="13" height="13" viewBox="0 0 13 13"><path d="M0 12h13" stroke="#ececec" stroke-width="1.200"/><path d="M4 4v5.500M9 .5v9" stroke="#ececec" stroke-width="2"/></svg>
<div style="left:1790.30px;top:550.60px;width:53.50px;height:16.80px;background:#242424;border-radius:4px;border:1px solid #3c3c3c;"></div>
<svg style="left:1792.70px;top:552.50px;" width="13" height="13" viewBox="0 0 13 13"><path d="M1 0v13M12 0v13" stroke="#ececec" stroke-width="1.200"/><path d="M6.500 2.500v8" stroke="#ececec" stroke-width="2.200"/></svg>
<div style="left:1808.10px;top:551.60px;width:0.70px;height:14.80px;background:#444;"></div>
<svg style="left:1810.50px;top:552.50px;" width="13" height="13" viewBox="0 0 13 13"><path d="M0 1h13M0 12h13" stroke="#ececec" stroke-width="1.200"/><path d="M2.500 6.500h8" stroke="#ececec" stroke-width="2.200"/></svg>
<div style="left:1825.90px;top:551.60px;width:0.70px;height:14.80px;background:#444;"></div>
<svg style="left:1828.30px;top:552.50px;" width="13" height="13" viewBox="0 0 13 13"><path d="M0 3v-2.500h2.500M10.500 .5h2.500v2.500M13 10v2.500h-2.500M2.500 12.500h-2.500v-2.500" fill="none" stroke="#ececec" stroke-width="1" /><path d="M3 10v-2.500M6.500 8v-3M10 5.500v-2.500" stroke="#ececec" stroke-width="2"/></svg>
<div style="left:494.00px;top:586.00px;width:94.00px;height:22.00px;background:#3c3c3c;border-radius:3px 3px 0 0;"></div>
<div style="left:588.50px;top:586.00px;width:95.50px;height:22.00px;background:#2e2e2e;border-radius:3px 3px 0 0;"></div>
<div style="left:500.00px;top:588.50px;height:18px;line-height:18px;color:#dcdcdc;white-space:pre;font-family:'Liberation Sans',sans-serif;font-size:12px;letter-spacing:-0.550px;">Scene Window</div>
<div style="left:591.50px;top:588.50px;height:18px;line-height:18px;color:#dcdcdc;white-space:pre;font-family:'Liberation Sans',sans-serif;font-size:12px;letter-spacing:-0.263px;">JavaScript Editor</div>
<div style="left:684.50px;top:586.00px;width:112.50px;height:22.00px;background:#262626;border-radius:3px 3px 0 0;"></div>
<div style="left:690.50px;top:588.50px;height:18px;line-height:18px;color:#dcdcdc;white-space:pre;font-family:'Liberation Sans',sans-serif;font-size:12px;letter-spacing:-0.205px;">Dependency Graph</div>
<div style="left:494.00px;top:608.00px;width:1419.70px;height:22.30px;background:#2a2a2a;"></div>
<div style="left:627.00px;top:610.50px;height:18px;line-height:18px;color:#a4a4a4;white-space:pre;font-family:'Liberation Sans',sans-serif;font-size:12px;letter-spacing:-0.060px;">Composition 1</div>
<svg style="left:834.50px;top:615.50px;" width="8" height="8" viewBox="0 0 8 8"><path d="M.5 .5 7.5 7.5M7.5 .5 .5 7.5" stroke="#b4b4b4" stroke-width="1"/></svg>
<div style="left:852.00px;top:614.50px;width:1.00px;height:10.00px;background:#a4a4a4;"></div>
<div style="left:979.00px;top:610.50px;height:18px;line-height:18px;color:#a4a4a4;white-space:pre;font-family:'Liberation Sans',sans-serif;font-size:12px;letter-spacing:-0.018px;">Composition 2</div>
<svg style="left:1187.00px;top:615.50px;" width="8" height="8" viewBox="0 0 8 8"><path d="M.5 .5 7.5 7.5M7.5 .5 .5 7.5" stroke="#b4b4b4" stroke-width="1"/></svg>
<div style="left:1204.50px;top:614.50px;width:1.00px;height:10.00px;background:#a4a4a4;"></div>
<div style="left:1331.50px;top:610.50px;height:18px;line-height:18px;color:#a4a4a4;white-space:pre;font-family:'Liberation Sans',sans-serif;font-size:12px;letter-spacing:-0.018px;">Composition 3</div>
<svg style="left:1540.00px;top:615.50px;" width="8" height="8" viewBox="0 0 8 8"><path d="M.5 .5 7.5 7.5M7.5 .5 .5 7.5" stroke="#b4b4b4" stroke-width="1"/></svg>
<div style="left:1557.50px;top:610.20px;width:351.50px;height:20.10px;background:#424242;border-radius:0 4px 0 0;"></div>
<div style="left:1684.00px;top:610.50px;height:18px;line-height:18px;color:#dcdcdc;white-space:pre;font-family:'Liberation Sans',sans-serif;font-size:12px;letter-spacing:-0.018px;">Composition 4</div>
<svg style="left:1892.00px;top:615.50px;" width="8" height="8" viewBox="0 0 8 8"><path d="M.5 .5 7.5 7.5M7.5 .5 .5 7.5" stroke="#b4b4b4" stroke-width="1"/></svg>
<div style="left:494.00px;top:630.30px;width:464.75px;height:345.70px;background:#3c3c3c;"></div>
<div style="left:500.00px;top:632.50px;width:250.40px;height:19.20px;background:#262626;border-radius:10px;"></div>
<div style="left:753.50px;top:632.30px;width:19.00px;height:19.50px;border-radius:4px;background:#2b2b2b;border:1px solid #1b1b1b;box-shadow:0 0 0 1px rgba(255,255,255,.04);"></div>
<svg style="left:756.00px;top:635.00px;" width="14" height="14" viewBox="0 0 14 14"><path d="M7 2v10M2 7h10" stroke="#f0f0f0" stroke-width="1.900"/><path d="M16 13v3.200h-3.200z" fill="#58c9a0"/></svg>
<div style="left:797.30px;top:632.30px;width:19.30px;height:19.50px;border-radius:4px;background:#2b2b2b;border:1px solid #1b1b1b;box-shadow:0 0 0 1px rgba(255,255,255,.04);"></div>
<div style="left:819.40px;top:632.30px;width:19.30px;height:19.50px;border-radius:4px;background:#2b2b2b;border:1px solid #1b1b1b;box-shadow:0 0 0 1px rgba(255,255,255,.04);"></div>
<div style="left:841.25px;top:632.30px;width:19.30px;height:19.50px;border-radius:4px;background:#2b2b2b;border:1px solid #1b1b1b;box-shadow:0 0 0 1px rgba(255,255,255,.04);"></div>
<div style="left:798.30px;top:633.30px;width:17.30px;height:17.50px;background:#3b3b3b;border-radius:3px;"></div>
<svg style="left:0;top:0;pointer-events:none;" width="1920" height="1029" viewBox="0 0 1920 1029"><path d="M800.10 643.80a4.200 4.200 0 0 0 5 5" fill="none" stroke="#dcdcdc" stroke-opacity="0.22" stroke-width="1.300"/><path d="M802.00 641.90a4.200 4.200 0 0 0 5 5" fill="none" stroke="#dcdcdc" stroke-opacity="0.4" stroke-width="1.300"/><path d="M803.90 640.00a4.200 4.200 0 0 0 5 5" fill="none" stroke="#dcdcdc" stroke-opacity="0.62" stroke-width="1.300"/><circle cx="810.00" cy="638.90" r="4.2" fill="#dcdcdc" /><circle cx="825.00" cy="637.10" r="1.5" fill="#d0d0d0" /><circle cx="832.00" cy="638.00" r="1.5" fill="#d0d0d0" /><circle cx="825.00" cy="643.90" r="1.5" fill="#d0d0d0" /><path d="M830.900 640.700c.500 2.700 1.300 3.600 4.200 4.200c-2.900 .600-3.700 1.500-4.200 4.200c-.500-2.700-1.300-3.600-4.200-4.200c2.900-.600 3.700-1.500 4.200-4.200z" fill="#e6e6e6" /><path d="M838.200 647.600v3.500h-3.500z" fill="#7bcfb5" /><path d="M843.9 636.4H845.75" fill="none" stroke="#e4e4e4" stroke-width="1.3" /><path d="M852 636.4H858" fill="none" stroke="#e4e4e4" stroke-width="1.3" /><circle cx="848.9" cy="636.4" r="1.800" fill="none" stroke="#bdbdbd" stroke-width="1.100"/><path d="M843.9 641.4H850" fill="none" stroke="#e4e4e4" stroke-width="1.3" /><path d="M855.9 641.4H858" fill="none" stroke="#e4e4e4" stroke-width="1.3" /><circle cx="853" cy="641.4" r="1.800" fill="none" stroke="#bdbdbd" stroke-width="1.100"/><path d="M843.9 646.5H845.75" fill="none" stroke="#e4e4e4" stroke-width="1.3" /><path d="M852 646.5H855.9" fill="none" stroke="#e4e4e4" stroke-width="1.3" /><circle cx="848.9" cy="646.5" r="1.800" fill="none" stroke="#bdbdbd" stroke-width="1.100"/><path d="M860.100 647.600v3.500h-3.500z" fill="#7bcfb5" /></svg>
<div style="left:863.00px;top:632.50px;width:94.00px;height:19.20px;background:#2a2a2a;border-radius:3px;"></div>
<div style="left:868.00px;top:633.75px;height:17.5px;line-height:17.5px;color:#555;white-space:pre;font-family:'Liberation Sans',sans-serif;font-size:11.5px;">F</div>
<div style="left:880.00px;top:633.50px;height:18px;line-height:18px;color:#dcdcdc;white-space:pre;font-family:'Liberation Sans',sans-serif;font-size:12px;letter-spacing:0.141px;">80</div>
<div style="left:494.00px;top:657.00px;width:464.75px;height:14.60px;background:#434343;"></div>
<div style="left:649.40px;top:654.80px;height:18px;line-height:18px;color:#dcdcdc;white-space:pre;font-family:'Liberation Sans',sans-serif;font-size:12px;letter-spacing:-0.339px;">Name</div>
<div style="left:494.00px;top:671.60px;width:451.00px;height:286.40px;background:#333333;"></div>
<div style="left:945.00px;top:671.60px;width:13.75px;height:290.40px;background:#3a3a3a;"></div>
<div style="left:947.60px;top:673.00px;width:8.90px;height:287.60px;background:#4c4c4c;border-radius:5px;"></div>
<svg width="0" height="0" style="left:0;top:0"><defs><radialGradient id="bl2"><stop offset="0" stop-color="#ffd0d6"/><stop offset=".5" stop-color="#f2a2ac"/><stop offset="1" stop-color="#6a4448"/></radialGradient></defs></svg>
<svg style="left:648.30px;top:676.00px;" width="15" height="15.5" viewBox="0 0 15 15.5"><rect x=".5" y="4.200" width="9.500" height="8.800" fill="#9fc9f5"/><rect x="5.900" y="3" width="5" height="5" fill="#333"/><path d="M6.900 .3h8.200M6.900 3.100h8.200M6.900 5.900h4.500v3.200" fill="none" stroke="#e8e8e8" stroke-width="1.100"/><path d="M11.400 5.900h3.700" stroke="#e8e8e8" stroke-width="1.100"/></svg>
<div style="left:667.30px;top:674.50px;height:18px;line-height:18px;color:#dcdcdc;white-space:pre;font-family:'Liberation Sans',sans-serif;font-size:12px;letter-spacing:0.067px;">Color Array</div>
<div style="left:905.00px;top:674.55px;width:21.00px;height:15.90px;background:#2a2a2a;border-radius:4px;"></div>
<div style="left:914.80px;top:674.55px;width:1.20px;height:15.90px;background:#1c1c1c;"></div>
<svg style="left:0;top:0;pointer-events:none;" width="1920" height="1029" viewBox="0 0 1920 1029"><path d="M907 682.55 909.700 679.40h3.400v6.300h-3.400z" fill="#e2cb72" /><path d="M924.200 682.55 921.500 679.40h-3.500v6.300h3.500z" fill="#d050f0" /><circle cx="936" cy="682.45" r="3.900" fill="none" stroke="#7c7c7c" stroke-width="1.200"/></svg>
<svg style="left:667.50px;top:698.08px;" width="15" height="15.5" viewBox="0 0 15 15.5"><path d="M0.7 0.7l2.600 2.600M3.3 0.7l-2.600 2.600" stroke="#9be39b" stroke-width="1"/><path d="M5.7 5.2l2.600 2.600M8.3 5.2l-2.600 2.600" stroke="#9be39b" stroke-width="1"/><path d="M1.2 10.2l2.600 2.600M3.8 10.2l-2.600 2.600" stroke="#9be39b" stroke-width="1"/><path d="M10.7 9.7l2.600 2.600M13.3 9.7l-2.600 2.600" stroke="#9be39b" stroke-width="1"/><rect x="10.500" y=".8" width="2.200" height="2.200" fill="#9be39b"/><rect x="11.800" y="5" width="1.800" height="1.800" fill="#9be39b"/><rect x="6" y="1.500" width="1.600" height="1.600" fill="#9be39b"/></svg>
<div style="left:686.40px;top:696.58px;height:18px;line-height:18px;color:#dcdcdc;white-space:pre;font-family:'Liberation Sans',sans-serif;font-size:12px;letter-spacing:-0.209px;">Random [Index]</div>
<div style="left:905.00px;top:696.63px;width:21.00px;height:15.90px;background:#2a2a2a;border-radius:4px;"></div>
<div style="left:914.80px;top:696.63px;width:1.20px;height:15.90px;background:#1c1c1c;"></div>
<svg style="left:0;top:0;pointer-events:none;" width="1920" height="1029" viewBox="0 0 1920 1029"><path d="M907 704.63 909.700 701.48h3.400v6.300h-3.400z" fill="#868686" /><path d="M924.200 704.63 921.500 701.48h-3.500v6.300h3.500z" fill="#d050f0" /><circle cx="936" cy="704.53" r="3.900" fill="none" stroke="#7c7c7c" stroke-width="1.200"/></svg>
<svg style="left:648.30px;top:720.16px;" width="15" height="15.5" viewBox="0 0 15 15.5"><path d="M-1 9C.5 3 2.500 1.500 3.800 5.500S6.500 13 8 7.500s2.800-6.500 4-2.500 2 7.500 4 2" fill="none" stroke="#9be39b" stroke-width="1.300"/></svg>
<div style="left:667.30px;top:718.66px;height:18px;line-height:18px;color:#dcdcdc;white-space:pre;font-family:'Liberation Sans',sans-serif;font-size:12px;letter-spacing:-0.071px;">Oscillator [Position.Z] Cosine</div>
<div style="left:905.00px;top:718.71px;width:21.00px;height:15.90px;background:#2a2a2a;border-radius:4px;"></div>
<div style="left:914.80px;top:718.71px;width:1.20px;height:15.90px;background:#1c1c1c;"></div>
<svg style="left:0;top:0;pointer-events:none;" width="1920" height="1029" viewBox="0 0 1920 1029"><path d="M907 726.71 909.700 723.56h3.400v6.300h-3.400z" fill="#e2cb72" /><path d="M924.200 726.71 921.500 723.56h-3.500v6.300h3.500z" fill="#d050f0" /><circle cx="936" cy="726.61" r="3.900" fill="none" stroke="#7c7c7c" stroke-width="1.200"/></svg>
<svg style="left:648.30px;top:742.24px;" width="15" height="15.5" viewBox="0 0 15 15.5"><path d="M4.300 1.200h6.400L7.500 5z" fill="#9be39b"/><path d="M7.500 5.500v8.500" stroke="#9be39b" stroke-width="2"/><path d="M2.600 6.500v2.600M12.400 6.500v2.600" stroke="#d8d8d8" stroke-width="1"/></svg>
<div style="left:667.30px;top:740.74px;height:18px;line-height:18px;color:#dcdcdc;white-space:pre;font-family:'Liberation Sans',sans-serif;font-size:12px;letter-spacing:-0.219px;">Frame [Time]</div>
<div style="left:905.00px;top:740.79px;width:21.00px;height:15.90px;background:#2a2a2a;border-radius:4px;"></div>
<div style="left:914.80px;top:740.79px;width:1.20px;height:15.90px;background:#1c1c1c;"></div>
<svg style="left:0;top:0;pointer-events:none;" width="1920" height="1029" viewBox="0 0 1920 1029"><path d="M907 748.79 909.700 745.64h3.400v6.300h-3.400z" fill="#868686" /><path d="M924.200 748.79 921.500 745.64h-3.500v6.300h3.500z" fill="#d050f0" /><circle cx="936" cy="748.69" r="3.900" fill="none" stroke="#7c7c7c" stroke-width="1.200"/></svg>
<svg style="left:648.30px;top:764.32px;" width="15" height="15.5" viewBox="0 0 15 15.5"><path d="M-1 9C.5 3 2.500 1.500 3.800 5.500S6.500 13 8 7.500s2.800-6.500 4-2.500 2 7.500 4 2" fill="none" stroke="#9be39b" stroke-width="1.300"/></svg>
<div style="left:667.30px;top:762.82px;height:18px;line-height:18px;color:#dcdcdc;white-space:pre;font-family:'Liberation Sans',sans-serif;font-size:12px;letter-spacing:-0.108px;">Oscillator [Position.X] Sine</div>
<div style="left:905.00px;top:762.87px;width:21.00px;height:15.90px;background:#2a2a2a;border-radius:4px;"></div>
<div style="left:914.80px;top:762.87px;width:1.20px;height:15.90px;background:#1c1c1c;"></div>
<svg style="left:0;top:0;pointer-events:none;" width="1920" height="1029" viewBox="0 0 1920 1029"><path d="M907 770.87 909.700 767.72h3.400v6.300h-3.400z" fill="#e2cb72" /><path d="M924.200 770.87 921.500 767.72h-3.500v6.300h3.500z" fill="#d050f0" /><circle cx="936" cy="770.77" r="3.900" fill="none" stroke="#7c7c7c" stroke-width="1.200"/></svg>
<svg style="left:648.30px;top:786.40px;" width="15" height="15.5" viewBox="0 0 15 15.5"><path d="M3 14.300V3M3 14.300h11" fill="none" stroke="#d8d8d8" stroke-width="1.100"/><path d="M4 13.300 9.500 7.800" stroke="#d8d8d8" stroke-width="1"/><path d="M7.500 6.500h4v4" fill="none" stroke="#9be39b" stroke-width="1"/><path d="M.8 4.300 3 1.600 5.200 4.300M12.300 12.500 14.500 14.500 12.300 16.300" fill="none" stroke="#9be39b" stroke-width="1"/></svg>
<div style="left:667.30px;top:784.90px;height:18px;line-height:18px;color:#dcdcdc;white-space:pre;font-family:'Liberation Sans',sans-serif;font-size:12px;letter-spacing:0.173px;">3D Matrix [Duplicator]</div>
<div style="left:905.00px;top:784.95px;width:21.00px;height:15.90px;background:#2a2a2a;border-radius:4px;"></div>
<div style="left:914.80px;top:784.95px;width:1.20px;height:15.90px;background:#1c1c1c;"></div>
<svg style="left:0;top:0;pointer-events:none;" width="1920" height="1029" viewBox="0 0 1920 1029"><path d="M907 792.95 909.700 789.80h3.400v6.300h-3.400z" fill="#e2cb72" /><path d="M924.200 792.95 921.500 789.80h-3.500v6.300h3.500z" fill="#d050f0" /><circle cx="936" cy="792.85" r="3.900" fill="none" stroke="#7c7c7c" stroke-width="1.200"/></svg>
<div style="left:627.00px;top:805.30px;width:315.60px;height:18.90px;background:#5a4549;border-radius:4px;"></div>
<svg style="left:648.30px;top:808.48px;" width="15" height="15.5" viewBox="0 0 15 15.5"><rect x=".6" y=".6" width="13.300" height="13.300" fill="#4c3a3e" stroke="#dedede" stroke-width="1.100"/><circle cx="7.250" cy="7.250" r="5" fill="url(#bl2)"/></svg>
<div style="left:667.30px;top:806.98px;height:18px;line-height:18px;color:#dcdcdc;white-space:pre;font-family:'Liberation Sans',sans-serif;font-size:12px;letter-spacing:0.016px;">Blur [Sub-Mesh [Duplicator]]</div>
<div style="left:905.00px;top:807.03px;width:21.00px;height:15.90px;background:#2a2a2a;border-radius:4px;"></div>
<div style="left:914.80px;top:807.03px;width:1.20px;height:15.90px;background:#1c1c1c;"></div>
<svg style="left:0;top:0;pointer-events:none;" width="1920" height="1029" viewBox="0 0 1920 1029"><path d="M907 815.03 909.700 811.88h3.400v6.300h-3.400z" fill="#868686" /><path d="M924.200 815.03 921.500 811.88h-3.500v6.300h3.500z" fill="#d050f0" /><circle cx="936" cy="814.93" r="3.900" fill="none" stroke="#7c7c7c" stroke-width="1.200"/></svg>
<svg style="left:648.30px;top:830.56px;" width="15" height="15.5" viewBox="0 0 15 15.5"><rect x="0" y="1" width="13" height="3" fill="#9be39b"/><path d="M0 7.500h13M0 11.500h13" stroke="#e8e8e8" stroke-width="1.500"/></svg>
<div style="left:667.30px;top:829.06px;height:18px;line-height:18px;color:#dcdcdc;white-space:pre;font-family:'Liberation Sans',sans-serif;font-size:12px;letter-spacing:-0.011px;">Sub-Mesh [Duplicator]</div>
<div style="left:905.00px;top:829.11px;width:21.00px;height:15.90px;background:#2a2a2a;border-radius:4px;"></div>
<div style="left:914.80px;top:829.11px;width:1.20px;height:15.90px;background:#1c1c1c;"></div>
<svg style="left:0;top:0;pointer-events:none;" width="1920" height="1029" viewBox="0 0 1920 1029"><path d="M907 837.11 909.700 833.96h3.400v6.300h-3.400z" fill="#e2cb72" /><path d="M924.200 837.11 921.500 833.96h-3.500v6.300h3.500z" fill="#d050f0" /><circle cx="936" cy="837.01" r="3.900" fill="none" stroke="#7c7c7c" stroke-width="1.200"/></svg>
<div style="left:905.00px;top:829.11px;width:10.30px;height:15.90px;border-radius:2px;border:1px solid #b79d4c;"></div>
<svg style="left:648.30px;top:852.64px;" width="15" height="15.5" viewBox="0 0 15 15.5"><rect x="0.0" y="1.0" width="2.200" height="2.200" fill="#ecd96b"/><rect x="0.0" y="6.3" width="2.200" height="2.200" fill="#ecd96b"/><rect x="0.0" y="11.6" width="2.200" height="2.200" fill="#ecd96b"/><rect x="5.3" y="1.0" width="2.200" height="2.200" fill="#ecd96b"/><rect x="5.3" y="6.3" width="2.200" height="2.200" fill="#ecd96b"/><rect x="5.3" y="11.6" width="2.200" height="2.200" fill="#ecd96b"/><rect x="10.6" y="1.0" width="2.200" height="2.200" fill="#ecd96b"/><rect x="10.6" y="6.3" width="2.200" height="2.200" fill="#ecd96b"/><rect x="10.6" y="11.6" width="2.200" height="2.200" fill="#ecd96b"/></svg>
<div style="left:667.30px;top:851.14px;height:18px;line-height:18px;color:#dcdcdc;white-space:pre;font-family:'Liberation Sans',sans-serif;font-size:12px;letter-spacing:0.163px;">Duplicator</div>
<div style="left:905.00px;top:851.19px;width:21.00px;height:15.90px;background:#2a2a2a;border-radius:4px;"></div>
<div style="left:914.80px;top:851.19px;width:1.20px;height:15.90px;background:#1c1c1c;"></div>
<svg style="left:0;top:0;pointer-events:none;" width="1920" height="1029" viewBox="0 0 1920 1029"><path d="M907 859.19 909.700 856.04h3.400v6.300h-3.400z" fill="#e2cb72" /><path d="M924.200 859.19 921.500 856.04h-3.500v6.300h3.500z" fill="#d050f0" /><circle cx="936" cy="859.09" r="3.900" fill="none" stroke="#7c7c7c" stroke-width="1.200"/></svg>
<svg style="left:648.30px;top:874.72px;" width="15" height="15.5" viewBox="0 0 15 15.5"><rect x="1" y="1.500" width="11.500" height="11.500" fill="none" stroke="#ecd96b" stroke-width="1.200" stroke-dasharray="5.500 3" stroke-dashoffset="2.700"/><rect x="0" y=".5" width="2" height="2" fill="#e8e8e8"/><rect x="11.500" y=".5" width="2" height="2" fill="#e8e8e8"/><rect x="0" y="12" width="2" height="2" fill="#e8e8e8"/><rect x="11.500" y="12" width="2" height="2" fill="#e8e8e8"/></svg>
<div style="left:667.30px;top:873.22px;height:18px;line-height:18px;color:#8d8d8d;white-space:pre;font-family:'Liberation Sans',sans-serif;font-size:12px;letter-spacing:-0.449px;">Ellipse Shape</div>
<div style="left:905.00px;top:873.27px;width:21.00px;height:15.90px;background:#2a2a2a;border-radius:4px;"></div>
<div style="left:914.80px;top:873.27px;width:1.20px;height:15.90px;background:#1c1c1c;"></div>
<svg style="left:0;top:0;pointer-events:none;" width="1920" height="1029" viewBox="0 0 1920 1029"><path d="M907 881.27 909.700 878.12h3.400v6.300h-3.400z" fill="#e2cb72" /><path d="M924.200 881.27 921.500 878.12h-3.500v6.300h3.500z" fill="#d050f0" /><circle cx="936" cy="881.17" r="3.900" fill="none" stroke="#7c7c7c" stroke-width="1.200"/></svg>
<svg style="left:667.50px;top:896.80px;" width="15" height="15.5" viewBox="0 0 15 15.5"><path d="M1 4.500h7l2.500 2.500v7h-9.500z" fill="#9fc9f5"/><path d="M5.500 7.500v5" stroke="#456" stroke-width="1.500"/><path d="M11 0 11.700 2.300 14 3 11.700 3.700 11 6 10.300 3.700 8 3 10.300 2.300z" fill="#e8e8e8"/><circle cx="8" cy="1.500" r=".8" fill="#e8e8e8"/><circle cx="13.500" cy="6.500" r=".7" fill="#e8e8e8"/></svg>
<div style="left:686.40px;top:895.30px;height:18px;line-height:18px;color:#dcdcdc;white-space:pre;font-family:'Liberation Sans',sans-serif;font-size:12px;letter-spacing:-0.035px;">Index Context [Number]</div>
<div style="left:905.00px;top:895.35px;width:21.00px;height:15.90px;background:#2a2a2a;border-radius:4px;"></div>
<div style="left:914.80px;top:895.35px;width:1.20px;height:15.90px;background:#1c1c1c;"></div>
<svg style="left:0;top:0;pointer-events:none;" width="1920" height="1029" viewBox="0 0 1920 1029"><path d="M907 903.35 909.700 900.20h3.400v6.300h-3.400z" fill="#868686" /><path d="M924.200 903.35 921.500 900.20h-3.500v6.300h3.500z" fill="#d050f0" /><circle cx="936" cy="903.25" r="3.900" fill="none" stroke="#7c7c7c" stroke-width="1.200"/></svg>
<svg style="left:667.50px;top:918.88px;" width="15" height="15.5" viewBox="0 0 15 15.5"><text x="-.5" y="8.500" font-family="Liberation Sans" font-size="8.500" fill="#e8e8e8" letter-spacing="-.3">abc</text><path d="M0 4.300h14" stroke="#9fc9f5" stroke-width="1"/><path d="M0 11.500h3M5 11.500h3.500M10.500 11.500h3.500" stroke="#e8e8e8" stroke-width="1.200"/></svg>
<div style="left:686.40px;top:917.38px;height:18px;line-height:18px;color:#dcdcdc;white-space:pre;font-family:'Liberation Sans',sans-serif;font-size:12px;letter-spacing:-0.023px;">String Generator [String]</div>
<div style="left:905.00px;top:917.43px;width:21.00px;height:15.90px;background:#2a2a2a;border-radius:4px;"></div>
<div style="left:914.80px;top:917.43px;width:1.20px;height:15.90px;background:#1c1c1c;"></div>
<svg style="left:0;top:0;pointer-events:none;" width="1920" height="1029" viewBox="0 0 1920 1029"><path d="M907 925.43 909.700 922.28h3.400v6.300h-3.400z" fill="#e2cb72" /><path d="M924.200 925.43 921.500 922.28h-3.500v6.300h3.500z" fill="#d050f0" /><circle cx="936" cy="925.33" r="3.900" fill="none" stroke="#7c7c7c" stroke-width="1.200"/></svg>
<svg style="left:667.50px;top:940.96px;" width="15" height="15.5" viewBox="0 0 15 15.5"><rect x="1.500" y="1.500" width="12" height="12.500" fill="none" stroke="#e8e8e8" stroke-width="1"/><path d="M4 4h7v2.200h-2.400v5.800h-2.200V6.200H4z" fill="#ecd96b"/><rect x="0" y="0" width="2" height="2" fill="#e8e8e8"/><rect x="13" y="0" width="2" height="2" fill="#e8e8e8"/><rect x="0" y="13.5" width="2" height="2" fill="#e8e8e8"/><rect x="13" y="13.5" width="2" height="2" fill="#e8e8e8"/></svg>
<div style="left:686.40px;top:939.46px;height:18px;line-height:18px;color:#8d8d8d;white-space:pre;font-family:'Liberation Sans',sans-serif;font-size:12px;letter-spacing:-0.115px;">Cavalry</div>
<div style="left:905.00px;top:939.51px;width:21.00px;height:15.90px;background:#2a2a2a;border-radius:4px;"></div>
<div style="left:914.80px;top:939.51px;width:1.20px;height:15.90px;background:#1c1c1c;"></div>
<svg style="left:0;top:0;pointer-events:none;" width="1920" height="1029" viewBox="0 0 1920 1029"><path d="M907 947.51 909.700 944.36h3.400v6.300h-3.400z" fill="#e2cb72" /><path d="M924.200 947.51 921.500 944.36h-3.500v6.300h3.500z" fill="#868686" /><circle cx="936" cy="947.41" r="3.900" fill="none" stroke="#7c7c7c" stroke-width="1.200"/></svg>
<div style="left:958.75px;top:630.30px;width:4.75px;height:367.20px;background:#222222;"></div>
<div style="left:961.00px;top:807.30px;width:2.00px;height:1.90px;background:#9a9a9a;"></div>
<div style="left:961.00px;top:810.30px;width:2.00px;height:1.90px;background:#9a9a9a;"></div>
<div style="left:961.00px;top:813.30px;width:2.00px;height:1.90px;background:#9a9a9a;"></div>
<div style="left:961.00px;top:816.30px;width:2.00px;height:1.90px;background:#9a9a9a;"></div>
<div style="left:961.00px;top:819.30px;width:2.00px;height:1.90px;background:#9a9a9a;"></div>
<div style="left:961.00px;top:822.30px;width:2.00px;height:1.90px;background:#9a9a9a;"></div>
<div style="left:627.00px;top:675.00px;width:15.00px;height:16.00px;background:#2d2d2d;"></div>
<div style="left:627.00px;top:873.00px;width:15.00px;height:16.00px;background:#2d2d2d;"></div>
<div style="left:495.00px;top:964.50px;width:448.75px;height:9.25px;background:#4c4c4c;border-radius:5px;"></div>
<div style="left:494.00px;top:976.00px;width:464.75px;height:21.50px;background:#3c3c3c;"></div>
<div style="left:497.50px;top:978.00px;width:18.50px;height:18.00px;border-radius:4px;background:#2b2b2b;border:1px solid #1b1b1b;box-shadow:0 0 0 1px rgba(255,255,255,.04);"></div>
<svg style="left:500.00px;top:982.00px;" width="14" height="11" viewBox="0 0 14 11"><path d="M4.500 .5h9v9h-9L.5 5z" fill="#e4e4e4"/><circle cx="5.300" cy="5" r="1.400" fill="#2b2b2b"/></svg>
<div style="left:520.50px;top:978.50px;height:18px;line-height:18px;color:#dcdcdc;white-space:pre;font-family:'Liberation Sans',sans-serif;font-size:12px;letter-spacing:-0.300px;">1 selected</div>
<div style="left:750.50px;top:978.00px;width:18.50px;height:18.00px;border-radius:4px;background:#2b2b2b;border:1px solid #1b1b1b;box-shadow:0 0 0 1px rgba(255,255,255,.04);"></div>
<div style="left:751.50px;top:979.00px;width:16.50px;height:16.00px;background:#414141;border-radius:3px;"></div>
<svg style="left:753.50px;top:980.50px;" width="13" height="13" viewBox="0 0 13 13"><rect x=".6" y=".6" width="11.800" height="11.800" fill="none" stroke="#c4c4c4" stroke-width="1.100"/><circle cx="6.500" cy="6.500" r="2" fill="#e0e0e0"/></svg>
<div style="left:773.00px;top:977.50px;width:183.50px;height:19.00px;background:#585858;border-radius:4px;"></div>
<div style="left:773.70px;top:978.50px;width:86.30px;height:17.20px;background:#252525;border-radius:3px;"></div>
<svg style="left:779.50px;top:981.00px;" width="13" height="12" viewBox="0 0 13 12"><path d="M1 1.500h11M3 6h9M1 10.500h8" stroke="#2fcf72" stroke-width="1.900"/></svg>
<div style="left:796.00px;top:978.50px;height:18px;line-height:18px;color:#dcdcdc;white-space:pre;font-family:'Liberation Sans',sans-serif;font-size:12px;letter-spacing:0.009px;">Time Editor</div>
<svg style="left:867.50px;top:980.50px;" width="14" height="13" viewBox="0 0 14 13"><path d="M2.500 0v12.500M0 10.500h13.500" stroke="#c8c8c8" stroke-width="1.100"/><path d="M2.500 10.500 12.500 3" stroke="#c8c8c8" stroke-width="1"/></svg>
<div style="left:885.00px;top:978.50px;height:18px;line-height:18px;color:#dcdcdc;white-space:pre;font-family:'Liberation Sans',sans-serif;font-size:12px;">Graph Editor</div>
<div style="left:963.50px;top:630.30px;width:950.20px;height:345.70px;background:#262626;"></div>
<div style="left:963.50px;top:630.30px;width:950.20px;height:24.30px;background:#222222;"></div>
<div style="left:974.30px;top:646.70px;width:1.00px;height:7.90px;background:#a8a8a8;"></div>
<div style="left:969.76px;top:629.75px;height:18px;line-height:18px;color:#dcdcdc;white-space:pre;font-family:'Liberation Sans',sans-serif;font-size:12px;">0</div>
<div style="left:985.46px;top:650.60px;width:1.00px;height:4.00px;background:#8a8a8a;"></div>
<div style="left:996.62px;top:650.60px;width:1.00px;height:4.00px;background:#8a8a8a;"></div>
<div style="left:1007.78px;top:650.60px;width:1.00px;height:4.00px;background:#8a8a8a;"></div>
<div style="left:1018.94px;top:650.60px;width:1.00px;height:4.00px;background:#8a8a8a;"></div>
<div style="left:1030.10px;top:646.70px;width:1.00px;height:7.90px;background:#a8a8a8;"></div>
<div style="left:1023.32px;top:629.75px;height:18px;line-height:18px;color:#dcdcdc;white-space:pre;font-family:'Liberation Sans',sans-serif;font-size:12px;">15</div>
<div style="left:1041.26px;top:650.60px;width:1.00px;height:4.00px;background:#8a8a8a;"></div>
<div style="left:1052.42px;top:650.60px;width:1.00px;height:4.00px;background:#8a8a8a;"></div>
<div style="left:1063.58px;top:650.60px;width:1.00px;height:4.00px;background:#8a8a8a;"></div>
<div style="left:1074.74px;top:650.60px;width:1.00px;height:4.00px;background:#8a8a8a;"></div>
<div style="left:1085.90px;top:646.70px;width:1.00px;height:7.90px;background:#a8a8a8;"></div>
<div style="left:1079.12px;top:629.75px;height:18px;line-height:18px;color:#dcdcdc;white-space:pre;font-family:'Liberation Sans',sans-serif;font-size:12px;">30</div>
<div style="left:1097.06px;top:650.60px;width:1.00px;height:4.00px;background:#8a8a8a;"></div>
<div style="left:1108.22px;top:650.60px;width:1.00px;height:4.00px;background:#8a8a8a;"></div>
<div style="left:1119.38px;top:650.60px;width:1.00px;height:4.00px;background:#8a8a8a;"></div>
<div style="left:1130.54px;top:650.60px;width:1.00px;height:4.00px;background:#8a8a8a;"></div>
<div style="left:1141.70px;top:646.70px;width:1.00px;height:7.90px;background:#a8a8a8;"></div>
<div style="left:1134.92px;top:629.75px;height:18px;line-height:18px;color:#dcdcdc;white-space:pre;font-family:'Liberation Sans',sans-serif;font-size:12px;">45</div>
<div style="left:1152.86px;top:650.60px;width:1.00px;height:4.00px;background:#8a8a8a;"></div>
<div style="left:1164.02px;top:650.60px;width:1.00px;height:4.00px;background:#8a8a8a;"></div>
<div style="left:1175.18px;top:650.60px;width:1.00px;height:4.00px;background:#8a8a8a;"></div>
<div style="left:1186.34px;top:650.60px;width:1.00px;height:4.00px;background:#8a8a8a;"></div>
<div style="left:1197.50px;top:646.70px;width:1.00px;height:7.90px;background:#a8a8a8;"></div>
<div style="left:1190.72px;top:629.75px;height:18px;line-height:18px;color:#dcdcdc;white-space:pre;font-family:'Liberation Sans',sans-serif;font-size:12px;">60</div>
<div style="left:1208.66px;top:650.60px;width:1.00px;height:4.00px;background:#8a8a8a;"></div>
<div style="left:1219.82px;top:650.60px;width:1.00px;height:4.00px;background:#8a8a8a;"></div>
<div style="left:1230.98px;top:650.60px;width:1.00px;height:4.00px;background:#8a8a8a;"></div>
<div style="left:1242.14px;top:650.60px;width:1.00px;height:4.00px;background:#8a8a8a;"></div>
<div style="left:1253.30px;top:646.70px;width:1.00px;height:7.90px;background:#a8a8a8;"></div>
<div style="left:1246.52px;top:629.75px;height:18px;line-height:18px;color:#dcdcdc;white-space:pre;font-family:'Liberation Sans',sans-serif;font-size:12px;">75</div>
<div style="left:1264.46px;top:650.60px;width:1.00px;height:4.00px;background:#8a8a8a;"></div>
<div style="left:1275.62px;top:650.60px;width:1.00px;height:4.00px;background:#8a8a8a;"></div>
<div style="left:1286.78px;top:650.60px;width:1.00px;height:4.00px;background:#8a8a8a;"></div>
<div style="left:1297.94px;top:650.60px;width:1.00px;height:4.00px;background:#8a8a8a;"></div>
<div style="left:1309.10px;top:646.70px;width:1.00px;height:7.90px;background:#a8a8a8;"></div>
<div style="left:1302.32px;top:629.75px;height:18px;line-height:18px;color:#dcdcdc;white-space:pre;font-family:'Liberation Sans',sans-serif;font-size:12px;">90</div>
<div style="left:1320.26px;top:650.60px;width:1.00px;height:4.00px;background:#8a8a8a;"></div>
<div style="left:1331.42px;top:650.60px;width:1.00px;height:4.00px;background:#8a8a8a;"></div>
<div style="left:1342.58px;top:650.60px;width:1.00px;height:4.00px;background:#8a8a8a;"></div>
<div style="left:1353.74px;top:650.60px;width:1.00px;height:4.00px;background:#8a8a8a;"></div>
<div style="left:1364.90px;top:646.70px;width:1.00px;height:7.90px;background:#a8a8a8;"></div>
<div style="left:1355.68px;top:629.75px;height:18px;line-height:18px;color:#dcdcdc;white-space:pre;font-family:'Liberation Sans',sans-serif;font-size:12px;">105</div>
<div style="left:1376.06px;top:650.60px;width:1.00px;height:4.00px;background:#8a8a8a;"></div>
<div style="left:1387.22px;top:650.60px;width:1.00px;height:4.00px;background:#8a8a8a;"></div>
<div style="left:1398.38px;top:650.60px;width:1.00px;height:4.00px;background:#8a8a8a;"></div>
<div style="left:1409.54px;top:650.60px;width:1.00px;height:4.00px;background:#8a8a8a;"></div>
<div style="left:1420.70px;top:646.70px;width:1.00px;height:7.90px;background:#a8a8a8;"></div>
<div style="left:1411.48px;top:629.75px;height:18px;line-height:18px;color:#dcdcdc;white-space:pre;font-family:'Liberation Sans',sans-serif;font-size:12px;">120</div>
<div style="left:1431.86px;top:650.60px;width:1.00px;height:4.00px;background:#8a8a8a;"></div>
<div style="left:1443.02px;top:650.60px;width:1.00px;height:4.00px;background:#8a8a8a;"></div>
<div style="left:1454.18px;top:650.60px;width:1.00px;height:4.00px;background:#8a8a8a;"></div>
<div style="left:1465.34px;top:650.60px;width:1.00px;height:4.00px;background:#8a8a8a;"></div>
<div style="left:1476.50px;top:646.70px;width:1.00px;height:7.90px;background:#a8a8a8;"></div>
<div style="left:1467.28px;top:629.75px;height:18px;line-height:18px;color:#dcdcdc;white-space:pre;font-family:'Liberation Sans',sans-serif;font-size:12px;">135</div>
<div style="left:1487.66px;top:650.60px;width:1.00px;height:4.00px;background:#8a8a8a;"></div>
<div style="left:1498.82px;top:650.60px;width:1.00px;height:4.00px;background:#8a8a8a;"></div>
<div style="left:1509.98px;top:650.60px;width:1.00px;height:4.00px;background:#8a8a8a;"></div>
<div style="left:1521.14px;top:650.60px;width:1.00px;height:4.00px;background:#8a8a8a;"></div>
<div style="left:1532.30px;top:646.70px;width:1.00px;height:7.90px;background:#a8a8a8;"></div>
<div style="left:1523.08px;top:629.75px;height:18px;line-height:18px;color:#dcdcdc;white-space:pre;font-family:'Liberation Sans',sans-serif;font-size:12px;">150</div>
<div style="left:1543.46px;top:650.60px;width:1.00px;height:4.00px;background:#8a8a8a;"></div>
<div style="left:1554.62px;top:650.60px;width:1.00px;height:4.00px;background:#8a8a8a;"></div>
<div style="left:1565.78px;top:650.60px;width:1.00px;height:4.00px;background:#8a8a8a;"></div>
<div style="left:1576.94px;top:650.60px;width:1.00px;height:4.00px;background:#8a8a8a;"></div>
<div style="left:1588.10px;top:646.70px;width:1.00px;height:7.90px;background:#a8a8a8;"></div>
<div style="left:1578.88px;top:629.75px;height:18px;line-height:18px;color:#dcdcdc;white-space:pre;font-family:'Liberation Sans',sans-serif;font-size:12px;">165</div>
<div style="left:1599.26px;top:650.60px;width:1.00px;height:4.00px;background:#8a8a8a;"></div>
<div style="left:1610.42px;top:650.60px;width:1.00px;height:4.00px;background:#8a8a8a;"></div>
<div style="left:1621.58px;top:650.60px;width:1.00px;height:4.00px;background:#8a8a8a;"></div>
<div style="left:1632.74px;top:650.60px;width:1.00px;height:4.00px;background:#8a8a8a;"></div>
<div style="left:1643.90px;top:646.70px;width:1.00px;height:7.90px;background:#a8a8a8;"></div>
<div style="left:1634.68px;top:629.75px;height:18px;line-height:18px;color:#dcdcdc;white-space:pre;font-family:'Liberation Sans',sans-serif;font-size:12px;">180</div>
<div style="left:1655.06px;top:650.60px;width:1.00px;height:4.00px;background:#8a8a8a;"></div>
<div style="left:1666.22px;top:650.60px;width:1.00px;height:4.00px;background:#8a8a8a;"></div>
<div style="left:1677.38px;top:650.60px;width:1.00px;height:4.00px;background:#8a8a8a;"></div>
<div style="left:1688.54px;top:650.60px;width:1.00px;height:4.00px;background:#8a8a8a;"></div>
<div style="left:1699.70px;top:646.70px;width:1.00px;height:7.90px;background:#a8a8a8;"></div>
<div style="left:1690.48px;top:629.75px;height:18px;line-height:18px;color:#dcdcdc;white-space:pre;font-family:'Liberation Sans',sans-serif;font-size:12px;">195</div>
<div style="left:1710.86px;top:650.60px;width:1.00px;height:4.00px;background:#8a8a8a;"></div>
<div style="left:1722.02px;top:650.60px;width:1.00px;height:4.00px;background:#8a8a8a;"></div>
<div style="left:1733.18px;top:650.60px;width:1.00px;height:4.00px;background:#8a8a8a;"></div>
<div style="left:1744.34px;top:650.60px;width:1.00px;height:4.00px;background:#8a8a8a;"></div>
<div style="left:1755.50px;top:646.70px;width:1.00px;height:7.90px;background:#a8a8a8;"></div>
<div style="left:1746.28px;top:629.75px;height:18px;line-height:18px;color:#dcdcdc;white-space:pre;font-family:'Liberation Sans',sans-serif;font-size:12px;">210</div>
<div style="left:1766.66px;top:650.60px;width:1.00px;height:4.00px;background:#8a8a8a;"></div>
<div style="left:1777.82px;top:650.60px;width:1.00px;height:4.00px;background:#8a8a8a;"></div>
<div style="left:1788.98px;top:650.60px;width:1.00px;height:4.00px;background:#8a8a8a;"></div>
<div style="left:1800.14px;top:650.60px;width:1.00px;height:4.00px;background:#8a8a8a;"></div>
<div style="left:1811.30px;top:646.70px;width:1.00px;height:7.90px;background:#a8a8a8;"></div>
<div style="left:1802.08px;top:629.75px;height:18px;line-height:18px;color:#dcdcdc;white-space:pre;font-family:'Liberation Sans',sans-serif;font-size:12px;">225</div>
<div style="left:1822.46px;top:650.60px;width:1.00px;height:4.00px;background:#8a8a8a;"></div>
<div style="left:1833.62px;top:650.60px;width:1.00px;height:4.00px;background:#8a8a8a;"></div>
<div style="left:1844.78px;top:650.60px;width:1.00px;height:4.00px;background:#8a8a8a;"></div>
<div style="left:1855.94px;top:650.60px;width:1.00px;height:4.00px;background:#8a8a8a;"></div>
<div style="left:1867.10px;top:646.70px;width:1.00px;height:7.90px;background:#a8a8a8;"></div>
<div style="left:1857.88px;top:629.75px;height:18px;line-height:18px;color:#dcdcdc;white-space:pre;font-family:'Liberation Sans',sans-serif;font-size:12px;">240</div>
<div style="left:1878.26px;top:650.60px;width:1.00px;height:4.00px;background:#8a8a8a;"></div>
<div style="left:1889.42px;top:650.60px;width:1.00px;height:4.00px;background:#8a8a8a;"></div>
<div style="left:1900.58px;top:650.60px;width:1.00px;height:4.00px;background:#8a8a8a;"></div>
<div style="left:1911.74px;top:650.60px;width:1.00px;height:4.00px;background:#8a8a8a;"></div>
<div style="left:970.00px;top:654.60px;width:939.90px;height:15.60px;background:#434343;"></div>
<div style="left:970.00px;top:653.30px;width:5.00px;height:17.50px;background:#7bcfb5;border-radius:1px;"></div>
<div style="left:1904.80px;top:653.30px;width:5.10px;height:17.50px;background:#7bcfb5;border-radius:1px;"></div>
<div style="left:975.20px;top:674.20px;width:929.30px;height:17.60px;background:repeating-linear-gradient(135deg,#61c48c 0,#61c48c 1.2px,#92f8ba 1.7px,#92f8ba 2.2px,#74e0a0 2.9px,#74e0a0 13.200000000000001px,#84ecac 13.85px,#84ecac 14.35px,#69ce96 15.05px,#61c48c 25.099999999999998px,#61c48c 25.114px);background-position:0 0;"></div>
<div style="left:983.20px;top:674.10px;height:18px;line-height:18px;color:#1d1d1d;white-space:pre;font-family:'Liberation Sans',sans-serif;font-size:12px;letter-spacing:0.067px;">Color Array</div>
<div style="left:975.20px;top:696.20px;width:929.30px;height:17.60px;background:repeating-linear-gradient(135deg,#b5d76f 0,#b5d76f 1.2px,#e8fe98 1.7px,#e8fe98 2.2px,#cdee84 2.9px,#cdee84 13.200000000000001px,#daf68a 13.85px,#daf68a 14.35px,#bedf76 15.05px,#b5d76f 25.099999999999998px,#b5d76f 25.114px);background-position:0 0;"></div>
<div style="left:983.20px;top:696.10px;height:18px;line-height:18px;color:#1d1d1d;white-space:pre;font-family:'Liberation Sans',sans-serif;font-size:12px;letter-spacing:-0.209px;">Random [Index]</div>
<div style="left:975.20px;top:718.20px;width:929.30px;height:17.60px;background:repeating-linear-gradient(135deg,#b5d76f 0,#b5d76f 1.2px,#e8fe98 1.7px,#e8fe98 2.2px,#cdee84 2.9px,#cdee84 13.200000000000001px,#daf68a 13.85px,#daf68a 14.35px,#bedf76 15.05px,#b5d76f 25.099999999999998px,#b5d76f 25.114px);background-position:0 0;"></div>
<div style="left:983.20px;top:718.10px;height:18px;line-height:18px;color:#1d1d1d;white-space:pre;font-family:'Liberation Sans',sans-serif;font-size:12px;letter-spacing:-0.071px;">Oscillator [Position.Z] Cosine</div>
<div style="left:975.20px;top:740.20px;width:929.30px;height:17.60px;background:repeating-linear-gradient(135deg,#b5d76f 0,#b5d76f 1.2px,#e8fe98 1.7px,#e8fe98 2.2px,#cdee84 2.9px,#cdee84 13.200000000000001px,#daf68a 13.85px,#daf68a 14.35px,#bedf76 15.05px,#b5d76f 25.099999999999998px,#b5d76f 25.114px);background-position:0 0;"></div>
<div style="left:983.20px;top:740.10px;height:18px;line-height:18px;color:#1d1d1d;white-space:pre;font-family:'Liberation Sans',sans-serif;font-size:12px;letter-spacing:-0.246px;">Frame [Time]</div>
<div style="left:975.20px;top:762.20px;width:929.30px;height:17.60px;background:repeating-linear-gradient(135deg,#b5d76f 0,#b5d76f 1.2px,#e8fe98 1.7px,#e8fe98 2.2px,#cdee84 2.9px,#cdee84 13.200000000000001px,#daf68a 13.85px,#daf68a 14.35px,#bedf76 15.05px,#b5d76f 25.099999999999998px,#b5d76f 25.114px);background-position:0 0;"></div>
<div style="left:983.20px;top:762.10px;height:18px;line-height:18px;color:#1d1d1d;white-space:pre;font-family:'Liberation Sans',sans-serif;font-size:12px;letter-spacing:-0.100px;">Oscillator [Position.X] Sine</div>
<div style="left:975.20px;top:784.20px;width:929.30px;height:17.60px;background:repeating-linear-gradient(135deg,#b5d76f 0,#b5d76f 1.2px,#e8fe98 1.7px,#e8fe98 2.2px,#cdee84 2.9px,#cdee84 13.200000000000001px,#daf68a 13.85px,#daf68a 14.35px,#bedf76 15.05px,#b5d76f 25.099999999999998px,#b5d76f 25.114px);background-position:0 0;"></div>
<div style="left:983.20px;top:784.10px;height:18px;line-height:18px;color:#1d1d1d;white-space:pre;font-family:'Liberation Sans',sans-serif;font-size:12px;letter-spacing:0.163px;">3D Matrix [Duplicator]</div>
<div style="left:975.20px;top:806.20px;width:929.30px;height:17.60px;background:#ee78a8;border:1px solid #fff;background:radial-gradient(circle at 1.5px 1.5px,#f9b0d2 0,#f9b0d2 .7px,rgba(0,0,0,0) 1.150px) 0 0/3px 4px,radial-gradient(circle at 1.5px 1.5px,#f9b0d2 0,#f9b0d2 .7px,rgba(0,0,0,0) 1.150px) 1.500px 2px/3px 4px,repeating-linear-gradient(135deg,#f388b6 0,#f388b6 13.900px,#e9709f 13.900px,#e9709f 25px);"></div>
<div style="left:983.20px;top:806.10px;height:18px;line-height:18px;color:#fff;white-space:pre;font-family:'Liberation Sans',sans-serif;font-size:12px;letter-spacing:-0.010px;text-shadow:0 0 .3px #fff;">Blur [Sub-Mesh [Duplicator]]</div>
<div style="left:975.20px;top:828.20px;width:929.30px;height:17.60px;background:repeating-linear-gradient(135deg,#b5d76f 0,#b5d76f 1.2px,#e8fe98 1.7px,#e8fe98 2.2px,#cdee84 2.9px,#cdee84 13.200000000000001px,#daf68a 13.85px,#daf68a 14.35px,#bedf76 15.05px,#b5d76f 25.099999999999998px,#b5d76f 25.114px);background-position:0 0;"></div>
<div style="left:983.20px;top:828.10px;height:18px;line-height:18px;color:#1d1d1d;white-space:pre;font-family:'Liberation Sans',sans-serif;font-size:12px;letter-spacing:-0.021px;">Sub-Mesh [Duplicator]</div>
<div style="left:975.20px;top:850.20px;width:929.30px;height:17.60px;background:#ffe97c;border-radius:3px;"></div>
<div style="left:983.20px;top:850.10px;height:18px;line-height:18px;color:#1d1d1d;white-space:pre;font-family:'Liberation Sans',sans-serif;font-size:12px;letter-spacing:0.152px;">Duplicator</div>
<div style="left:975.20px;top:872.20px;width:929.30px;height:17.60px;background:#ffe97c;border-radius:3px;"></div>
<div style="left:983.20px;top:872.10px;height:18px;line-height:18px;color:#1d1d1d;white-space:pre;font-family:'Liberation Sans',sans-serif;font-size:12px;letter-spacing:-0.466px;">Ellipse Shape</div>
<div style="left:975.20px;top:894.20px;width:929.30px;height:17.60px;background:repeating-linear-gradient(135deg,#577ed5 0,#577ed5 1.2px,#86aefa 1.7px,#86aefa 2.2px,#6a96f0 2.9px,#6a96f0 13.200000000000001px,#789ff4 13.85px,#789ff4 14.35px,#5e88e0 15.05px,#577ed5 25.099999999999998px,#577ed5 25.114px);background-position:0 0;"></div>
<div style="left:983.20px;top:894.10px;height:18px;line-height:18px;color:#fff;white-space:pre;font-family:'Liberation Sans',sans-serif;font-size:12px;letter-spacing:-0.035px;text-shadow:0 0 .3px #fff;">Index Context [Number]</div>
<div style="left:975.20px;top:916.20px;width:929.30px;height:17.60px;background:repeating-linear-gradient(135deg,#577ed5 0,#577ed5 1.2px,#86aefa 1.7px,#86aefa 2.2px,#6a96f0 2.9px,#6a96f0 13.200000000000001px,#789ff4 13.85px,#789ff4 14.35px,#5e88e0 15.05px,#577ed5 25.099999999999998px,#577ed5 25.114px);background-position:0 0;"></div>
<div style="left:983.20px;top:916.10px;height:18px;line-height:18px;color:#fff;white-space:pre;font-family:'Liberation Sans',sans-serif;font-size:12px;letter-spacing:-0.044px;text-shadow:0 0 .3px #fff;">String Generator [String]</div>
<div style="left:975.20px;top:938.20px;width:929.30px;height:17.60px;background:#b58cfb;border-radius:3px;"></div>
<div style="left:983.20px;top:938.10px;height:18px;line-height:18px;color:#fff;white-space:pre;font-family:'Liberation Sans',sans-serif;font-size:12px;letter-spacing:-0.198px;text-shadow:0 0 .3px #fff;">Cavalry</div>
<div style="left:966.00px;top:873.00px;width:8.50px;height:16.00px;background:#2d2d2d;"></div>
<div style="left:1271.80px;top:654.00px;width:1.20px;height:307.75px;background:#7bcfb5;"></div>
<svg style="left:1264.40px;top:644.50px;" width="16" height="10" viewBox="0 0 16 10"><path d="M.5 .5h15L8 9.500z" fill="#7bcfb5"/></svg>
<div style="left:967.00px;top:964.50px;width:945.50px;height:9.25px;background:#4c4c4c;border-radius:5px;"></div>
<div style="left:966.00px;top:976.00px;width:947.70px;height:21.50px;background:#3c3c3c;"></div>
<div style="left:969.50px;top:978.00px;width:16.50px;height:18.00px;border-radius:4px;background:#2b2b2b;border:1px solid #1b1b1b;box-shadow:0 0 0 1px rgba(255,255,255,.04);"></div>
<svg style="left:971.50px;top:980.50px;" width="14" height="13" viewBox="0 0 14 13"><path d="M0 1.500h13M0 5.500h13" stroke="#e4e4e4" stroke-width="1.500"/><path d="M0 9.500h2.500M4.500 9.500h2.500M9 9.500h2.500" stroke="#e4e4e4" stroke-width="1.500"/><path d="M14.500 11v3.200h-3.200z" fill="#58c9a0"/></svg>
<div style="left:990.00px;top:979.00px;width:150.00px;height:16.00px;background:#2a2a2a;border-radius:3px;"></div>
<div style="left:992.50px;top:978.50px;height:18px;line-height:18px;color:#dcdcdc;white-space:pre;font-family:'Liberation Sans',sans-serif;font-size:12px;letter-spacing:-0.122px;">Default Keyframe Layer</div>
<div style="left:1146.00px;top:979.00px;width:69.75px;height:16.00px;background:#2a2a2a;border-radius:3px;"></div>
<div style="left:1150.50px;top:978.75px;height:17.5px;line-height:17.5px;color:#555;white-space:pre;font-family:'Liberation Sans',sans-serif;font-size:11.5px;">F</div>
<div style="left:1164.00px;top:978.50px;height:18px;line-height:18px;color:#dcdcdc;white-space:pre;font-family:'Liberation Sans',sans-serif;font-size:12px;">-</div>
<div style="left:1222.00px;top:978.50px;height:18px;line-height:18px;color:#dcdcdc;white-space:pre;font-family:'Liberation Sans',sans-serif;font-size:12px;letter-spacing:-0.006px;">Align:</div>
<div style="left:1258.75px;top:978.20px;width:52.50px;height:17.10px;border-radius:4px;background:#2b2b2b;border:1px solid #1b1b1b;box-shadow:0 0 0 1px rgba(255,255,255,.04);"></div>
<svg style="left:0;top:0;pointer-events:none;" width="1920" height="1029" viewBox="0 0 1920 1029"><rect x="1276.20" y="979.20" width="0.70" height="15.10" fill="#1b1b1b" /><rect x="1293.90" y="979.20" width="0.70" height="15.10" fill="#1b1b1b" /><path d="M1261.500 979.400V994" fill="none" stroke="#ececec" stroke-width="1.2" /><rect x="1264.00" y="983.00" width="2.00" height="2.00" fill="#6fe0c0" /><rect x="1267.10" y="983.00" width="2.90" height="2.00" fill="#ececec" /><rect x="1264.00" y="988.80" width="2.00" height="2.00" fill="#6fe0c0" /><rect x="1267.10" y="988.80" width="7.10" height="2.00" fill="#ececec" /><path d="M1285.600 979.400V994" fill="none" stroke="#ececec" stroke-width="1.2" /><rect x="1282.10" y="983.00" width="1.10" height="2.00" fill="#ececec" /><rect x="1284.20" y="982.80" width="2.90" height="2.40" fill="#6fe0c0" /><rect x="1287.90" y="983.00" width="1.10" height="2.00" fill="#ececec" /><rect x="1280.00" y="988.80" width="2.90" height="2.00" fill="#ececec" /><rect x="1284.20" y="988.60" width="2.90" height="2.40" fill="#6fe0c0" /><rect x="1287.90" y="988.80" width="3.10" height="2.00" fill="#ececec" /><path d="M1308.600 979.400V994" fill="none" stroke="#ececec" stroke-width="1.2" /><rect x="1300.00" y="983.00" width="2.90" height="2.00" fill="#ececec" /><rect x="1304.00" y="983.00" width="2.00" height="2.00" fill="#6fe0c0" /><rect x="1296.00" y="988.80" width="6.90" height="2.00" fill="#ececec" /><rect x="1304.00" y="988.80" width="2.00" height="2.00" fill="#6fe0c0" /></svg>
<div style="left:1315.80px;top:978.20px;width:16.30px;height:17.10px;border-radius:4px;background:#2b2b2b;border:1px solid #1b1b1b;box-shadow:0 0 0 1px rgba(255,255,255,.04);"></div>
<svg style="left:0;top:0;pointer-events:none;" width="1920" height="1029" viewBox="0 0 1920 1029"><rect x="1317.7" y="980.9" width="1.800" height="1.700" fill="none" stroke="#b8b8b8" stroke-width=".8"/><rect x="1317.7" y="991.6999999999999" width="1.800" height="1.700" fill="none" stroke="#b8b8b8" stroke-width=".8"/><rect x="1328.6000000000001" y="980.9" width="1.800" height="1.700" fill="none" stroke="#b8b8b8" stroke-width=".8"/><rect x="1328.6000000000001" y="991.6999999999999" width="1.800" height="1.700" fill="none" stroke="#b8b8b8" stroke-width=".8"/><path d="M1321.200 981.600h5.500M1321.200 992.300h5.500M1318.500 984v5.800M1329.400 984v5.800" fill="none" stroke="#a8a8a8" stroke-width="1" /><rect x="1323.10" y="986.00" width="1.80" height="1.80" fill="#dcdcdc" /></svg>
<div style="left:1336.70px;top:978.20px;width:30.00px;height:17.10px;border-radius:4px;background:#2b2b2b;border:1px solid #1b1b1b;box-shadow:0 0 0 1px rgba(255,255,255,.04);"></div>
<div style="left:1337.70px;top:979.20px;width:16.60px;height:15.10px;background:#414141;border-radius:3px 0 0 3px;"></div>
<div style="left:1354.30px;top:979.20px;width:0.70px;height:15.10px;background:#1b1b1b;"></div>
<svg style="left:0;top:0;pointer-events:none;" width="1920" height="1029" viewBox="0 0 1920 1029"><path d="M1351.250 985.700 1348.300 982.600a3.700 3.700 0 0 0-5.300 5.300L1345.800 991.100" fill="none" stroke="#d0d0d0" stroke-width="2.2" /><path d="M1350.400 984.800 1352 986.400M1345 990.200 1346.600 991.800" fill="none" stroke="#f4f4f4" stroke-width="2.2" /><path d="M1358.600 983.800 1363.500 986.400 1358.600 989z" fill="none" stroke="#6a6a6a" stroke-width="1" /></svg>
<div style="left:1371.80px;top:978.20px;width:29.90px;height:17.10px;border-radius:4px;background:#2b2b2b;border:1px solid #1b1b1b;box-shadow:0 0 0 1px rgba(255,255,255,.04);"></div>
<div style="left:1372.80px;top:979.20px;width:16.50px;height:15.10px;background:#414141;border-radius:3px 0 0 3px;"></div>
<div style="left:1389.30px;top:979.20px;width:0.70px;height:15.10px;background:#1b1b1b;"></div>
<svg style="left:0;top:0;pointer-events:none;" width="1920" height="1029" viewBox="0 0 1920 1029"><path d="M1374.200 987.300h2.600M1384.200 987.300h3.800" fill="none" stroke="#dcdcdc" stroke-width="1.1" /><path d="M1378.600 981V994M1380.700 984V990.700M1382.500 985.700V989" fill="none" stroke="#dcdcdc" stroke-width="1.1" /><path d="M1393.600 983.800 1398.500 986.400 1393.600 989z" fill="none" stroke="#6a6a6a" stroke-width="1" /></svg>
<svg style="left:1742.50px;top:980.50px;" width="16" height="16" viewBox="0 0 16 16"><circle cx="6.500" cy="6.500" r="5.300" fill="none" stroke="#d8d8d8" stroke-width="1.100"/><path d="M4 6.500h5" stroke="#d8d8d8" stroke-width="1.100"/><path d="M10.500 10.500 13 13" stroke="#d8d8d8" stroke-width="1.600"/></svg>
<div style="left:1767.00px;top:985.80px;width:114.00px;height:2.40px;background:#4e4e4e;border-radius:1.2px;"></div>
<svg style="left:1761.50px;top:981.50px;" width="11" height="11" viewBox="0 0 11 11"><circle cx="5.500" cy="5.500" r="5.200" fill="#7bcfb5"/><circle cx="5.500" cy="5.500" r="1.800" fill="#56a890"/></svg>
<svg style="left:1886.50px;top:980.50px;" width="16" height="16" viewBox="0 0 16 16"><circle cx="6.500" cy="6.500" r="5.300" fill="none" stroke="#d8d8d8" stroke-width="1.100"/><path d="M4 6.500h5M6.500 4v5" stroke="#d8d8d8" stroke-width="1.100"/><path d="M10.500 10.500 13 13" stroke="#d8d8d8" stroke-width="1.600"/></svg>
<div style="left:494.00px;top:1003.80px;width:1419.70px;height:22.00px;background:#383838;"></div>
<div style="left:497.90px;top:1010.00px;width:2.10px;height:2.00px;background:#8a8a8a;"></div>
<div style="left:497.90px;top:1014.00px;width:2.10px;height:2.00px;background:#8a8a8a;"></div>
<div style="left:497.90px;top:1018.00px;width:2.10px;height:2.00px;background:#8a8a8a;"></div>
<div style="left:507.40px;top:1006.50px;width:16.80px;height:17.00px;border-radius:4px;background:#2b2b2b;border:1px solid #1b1b1b;box-shadow:0 0 0 1px rgba(255,255,255,.04);"></div>
<svg style="left:0;top:0;pointer-events:none;" width="1920" height="1029" viewBox="0 0 1920 1029"><path d="M509 1009h12.200v12.200l-3.600-3.400h-8.600z" fill="#e6e6e6" /><rect x="511.00" y="1010.95" width="1.60" height="0.90" fill="#222" /><rect x="514.20" y="1010.95" width="4.70" height="0.90" fill="#222" /><rect x="511.00" y="1013.05" width="1.60" height="0.90" fill="#222" /><rect x="514.20" y="1013.05" width="4.70" height="0.90" fill="#222" /><rect x="511.00" y="1015.05" width="1.60" height="0.90" fill="#222" /><rect x="514.20" y="1015.05" width="4.70" height="0.90" fill="#222" /><path d="M524.200 1020.300v3.200h-3.200z" fill="#7bcfb5" /></svg>
<div style="left:528.00px;top:1008.00px;width:18.00px;height:14.00px;background:#2ecc71;border-radius:2.5px;"></div>
<div style="left:533.80px;top:1006.65px;height:17.5px;line-height:17.5px;color:#0b2414;white-space:pre;font-family:'Liberation Sans',sans-serif;font-size:11.5px;">2</div>
<div style="left:553.90px;top:1011.90px;width:6.20px;height:6.20px;background:#2ecc71;border-radius:4px;"></div>
<div style="left:565.00px;top:1006.00px;height:18px;line-height:18px;color:#dcdcdc;white-space:pre;font-family:'Liberation Sans',sans-serif;font-size:12px;letter-spacing:-0.155px;">Connected:</div>
<div style="left:628.00px;top:1006.00px;height:18px;line-height:18px;color:#d66ee8;white-space:pre;font-family:'Liberation Sans',sans-serif;font-size:12px;letter-spacing:-0.117px;">Oscillator [Position.X] Sine</div>
<div style="left:769.50px;top:1006.00px;height:18px;line-height:18px;color:#dcdcdc;white-space:pre;font-family:'Liberation Sans',sans-serif;font-size:12px;letter-spacing:-0.016px;">to</div>
<div style="left:782.50px;top:1006.00px;height:18px;line-height:18px;color:#c9b15f;white-space:pre;font-family:'Liberation Sans',sans-serif;font-size:12px;letter-spacing:-0.080px;">Oscillator [Position.Z] Cosine.</div>
<div style="left:1482.00px;top:1006.25px;height:17.5px;line-height:17.5px;color:#e8e8e8;white-space:pre;font-family:'Liberation Sans',sans-serif;font-size:11.5px;font-style:italic;letter-spacing:-0.510px;">Click to see next message</div>
<div style="left:1610.00px;top:1006.30px;width:80.00px;height:17.45px;background:#c9b565;border-radius:2px;"></div>
<div style="left:1615.50px;top:1006.30px;height:18px;line-height:18px;color:#2a2410;white-space:pre;font-family:'Liberation Sans',sans-serif;font-size:12px;letter-spacing:-0.386px;">Feedback</div>
<svg style="left:1671.00px;top:1008.50px;" width="13" height="14" viewBox="0 0 13 14"><path d="M1 .5h7l3 3v10h-10z" fill="#f4f4f4" stroke="#bbb" stroke-width=".6"/><path d="M3 5h5M3 7.500h5M3 10h3" stroke="#8ac28a" stroke-width="1"/><path d="M6 10.500 11.500 4.500 13 6 7.500 11.800 5.500 12.300z" fill="#f08a3c"/></svg>
<div style="left:1693.00px;top:1006.30px;width:109.00px;height:17.45px;background:#2fcf72;border-radius:2px;"></div>
<div style="left:1698.30px;top:1006.30px;height:18px;line-height:18px;color:#0c3018;white-space:pre;font-family:'Liberation Sans',sans-serif;font-size:12px;letter-spacing:-0.184px;">Upgrade to Pro</div>
<svg style="left:1782.50px;top:1012.80px;" width="11" height="10" viewBox="0 0 11 10"><path d="M.5 5.500c0-2.500 .8-4.500 2-4.500S3.700 2.300 4 3.800L5 5.800v4h-4.500z" fill="#f5c842"/><path d="M10.500 5.500c0-2.500-.8-4.500-2-4.500S7.300 2.300 7 3.800L6 5.800v4h4.500z" fill="#f5c842"/></svg>
<div style="left:1805.00px;top:1006.30px;width:106.00px;height:17.45px;background:#3fa7f2;border-radius:2px;"></div>
<div style="left:1809.80px;top:1006.30px;height:18px;line-height:18px;color:#0a2740;white-space:pre;font-family:'Liberation Sans',sans-serif;font-size:12px;letter-spacing:-0.232px;">Tips and Tricks</div>
<svg style="left:1891.00px;top:1008.50px;" width="15" height="15" viewBox="0 0 15 15"><path d="M13.500 1c-4 0-7 2-9 6.500l3 3c4.500-2 6.500-5 6-9.500z" fill="#eee"/><path d="M13.500 1c-1.500 0-2.800 .3-4 .9l3.200 3.200c.6-1.200.9-2.600.8-4.100z" fill="#e8534c"/><circle cx="9.800" cy="5" r="1.300" fill="#6ab0e8"/><path d="M4.500 7.500 1.500 8l2-2.500h2.500zM7.500 10.500 7 13.500l2.500-2v-2.500z" fill="#e8534c"/><path d="M4 10.800 1.500 13.500" stroke="#f5a142" stroke-width="1.600"/></svg>
<div style="left:150.80px;top:349.60px;width:238.00px;height:347.90px;background:#262626;box-shadow:4px 4px 5px rgba(0,0,0,.4);"></div>
<div style="left:173.20px;top:352.00px;height:18px;line-height:18px;color:#e4e4e4;white-space:pre;font-family:'Liberation Sans',sans-serif;font-size:12px;letter-spacing:-0.246px;">Set Keyframe</div>
<div style="left:333.69px;top:352.00px;height:18px;line-height:18px;color:#e4e4e4;white-space:pre;font-family:'Liberation Sans',sans-serif;font-size:12px;">X</div>
<div style="left:367.79px;top:352.00px;height:18px;line-height:18px;color:#e4e4e4;white-space:pre;font-family:'Liberation Sans',sans-serif;font-size:12px;">Y</div>
<div style="left:173.20px;top:376.00px;height:18px;line-height:18px;color:#6e6e6e;white-space:pre;font-family:'Liberation Sans',sans-serif;font-size:12px;letter-spacing:-0.316px;">Add Expression...</div>
<div style="left:173.20px;top:399.80px;height:18px;line-height:18px;color:#6e6e6e;white-space:pre;font-family:'Liberation Sans',sans-serif;font-size:12px;letter-spacing:0.063px;">Reset Attribute Value to Default</div>
<div style="left:173.20px;top:423.70px;height:18px;line-height:18px;color:#e4e4e4;white-space:pre;font-family:'Liberation Sans',sans-serif;font-size:12px;letter-spacing:-0.670px;">Rename...</div>
<div style="left:173.20px;top:447.70px;height:18px;line-height:18px;color:#e4e4e4;white-space:pre;font-family:'Liberation Sans',sans-serif;font-size:12px;letter-spacing:0.200px;">Mute Input</div>
<div style="left:333.69px;top:447.70px;height:18px;line-height:18px;color:#6e6e6e;white-space:pre;font-family:'Liberation Sans',sans-serif;font-size:12px;">X</div>
<div style="left:367.79px;top:447.70px;height:18px;line-height:18px;color:#6e6e6e;white-space:pre;font-family:'Liberation Sans',sans-serif;font-size:12px;">Y</div>
<div style="left:173.20px;top:471.80px;height:18px;line-height:18px;color:#e4e4e4;white-space:pre;font-family:'Liberation Sans',sans-serif;font-size:12px;letter-spacing:0.183px;">Control with Null</div>
<div style="left:173.20px;top:495.80px;height:18px;line-height:18px;color:#e4e4e4;white-space:pre;font-family:'Liberation Sans',sans-serif;font-size:12px;letter-spacing:-0.103px;">Add Behaviour</div>
<svg style="left:155.00px;top:499.80px;" width="10" height="10" viewBox="0 0 10 10"><path d="M5 .3v9.400M.3 5h9.400" stroke="#ececec" stroke-width="1.600"/></svg>
<svg style="left:375.50px;top:500.30px;" width="5" height="9" viewBox="0 0 5 9"><path d="M.6 .6 4.400 4.500 .6 8.400" fill="none" stroke="#c4c4c4" stroke-width="1"/></svg>
<div style="left:173.20px;top:517.80px;height:18px;line-height:18px;color:#e4e4e4;white-space:pre;font-family:'Liberation Sans',sans-serif;font-size:12px;letter-spacing:0.100px;">Add Array</div>
<svg style="left:155.00px;top:521.80px;" width="10" height="10" viewBox="0 0 10 10"><path d="M5 .3v9.400M.3 5h9.400" stroke="#ececec" stroke-width="1.600"/></svg>
<svg style="left:375.50px;top:522.30px;" width="5" height="9" viewBox="0 0 5 9"><path d="M.6 .6 4.400 4.500 .6 8.400" fill="none" stroke="#c4c4c4" stroke-width="1"/></svg>
<div style="left:173.20px;top:539.80px;height:18px;line-height:18px;color:#e4e4e4;white-space:pre;font-family:'Liberation Sans',sans-serif;font-size:12px;letter-spacing:0.085px;">Add Math/ Script</div>
<svg style="left:155.00px;top:543.80px;" width="10" height="10" viewBox="0 0 10 10"><path d="M5 .3v9.400M.3 5h9.400" stroke="#ececec" stroke-width="1.600"/></svg>
<svg style="left:375.50px;top:544.30px;" width="5" height="9" viewBox="0 0 5 9"><path d="M.6 .6 4.400 4.500 .6 8.400" fill="none" stroke="#c4c4c4" stroke-width="1"/></svg>
<div style="left:173.20px;top:561.80px;height:18px;line-height:18px;color:#e4e4e4;white-space:pre;font-family:'Liberation Sans',sans-serif;font-size:12px;letter-spacing:0.247px;">Add Utility</div>
<svg style="left:155.00px;top:565.80px;" width="10" height="10" viewBox="0 0 10 10"><path d="M5 .3v9.400M.3 5h9.400" stroke="#ececec" stroke-width="1.600"/></svg>
<svg style="left:375.50px;top:566.30px;" width="5" height="9" viewBox="0 0 5 9"><path d="M.6 .6 4.400 4.500 .6 8.400" fill="none" stroke="#c4c4c4" stroke-width="1"/></svg>
<div style="left:173.20px;top:585.80px;height:18px;line-height:18px;color:#6e6e6e;white-space:pre;font-family:'Liberation Sans',sans-serif;font-size:12px;letter-spacing:-0.018px;">Set Selected Attributes</div>
<div style="left:173.20px;top:607.80px;height:18px;line-height:18px;color:#e4e4e4;white-space:pre;font-family:'Liberation Sans',sans-serif;font-size:12px;letter-spacing:-0.356px;">Set Selected Layers</div>
<div style="left:173.20px;top:631.80px;height:18px;line-height:18px;color:#e4e4e4;white-space:pre;font-family:'Liberation Sans',sans-serif;font-size:12px;letter-spacing:-0.240px;">Copy Value</div>
<div style="left:173.20px;top:655.80px;height:18px;line-height:18px;color:#e4e4e4;white-space:pre;font-family:'Liberation Sans',sans-serif;font-size:12px;letter-spacing:-0.310px;">Copy Layer Id</div>
<div style="left:173.20px;top:677.80px;height:18px;line-height:18px;color:#e4e4e4;white-space:pre;font-family:'Liberation Sans',sans-serif;font-size:12px;letter-spacing:-0.170px;">Copy Scripting Path</div>
<svg style="left:375.50px;top:682.30px;" width="5" height="9" viewBox="0 0 5 9"><path d="M.6 .6 4.400 4.500 .6 8.400" fill="none" stroke="#c4c4c4" stroke-width="1"/></svg>
<div style="left:150.80px;top:371.90px;width:238.00px;height:1.10px;background:#4a4a4a;"></div>
<div style="left:150.80px;top:395.80px;width:238.00px;height:1.10px;background:#4a4a4a;"></div>
<div style="left:150.80px;top:420.00px;width:238.00px;height:1.10px;background:#4a4a4a;"></div>
<div style="left:150.80px;top:444.00px;width:238.00px;height:1.10px;background:#4a4a4a;"></div>
<div style="left:150.80px;top:468.10px;width:238.00px;height:1.10px;background:#4a4a4a;"></div>
<div style="left:150.80px;top:491.80px;width:238.00px;height:1.10px;background:#4a4a4a;"></div>
<div style="left:150.80px;top:582.10px;width:238.00px;height:1.10px;background:#4a4a4a;"></div>
<div style="left:150.80px;top:628.20px;width:238.00px;height:1.10px;background:#4a4a4a;"></div>
<div style="left:150.80px;top:652.20px;width:238.00px;height:1.10px;background:#4a4a4a;"></div>
<div style="left:389.20px;top:493.00px;width:237.10px;height:462.50px;background:#262626;box-shadow:4px 4px 5px rgba(0,0,0,.4);"></div>
<svg style="left:390.00px;top:497.30px;" width="15" height="15" viewBox="0 0 15 15"><path d="M1.500 13.500v-12h12" fill="none" stroke="#e0e0e0" stroke-width="1.100"/><path d="M13.500 1.500v12" stroke="#e0e0e0" stroke-width="1.100"/><rect x="1.500" y="6" width="8" height="8" fill="#9be39b"/><path d="M9.500 6 13 2.500" stroke="#e0e0e0" stroke-width="1"/></svg>
<div style="left:410.50px;top:495.90px;height:18px;line-height:18px;color:#e4e4e4;white-space:pre;font-family:'Liberation Sans',sans-serif;font-size:12px;letter-spacing:-0.516px;">Area Range</div>
<div style="left:570.69px;top:495.80px;height:18px;line-height:18px;color:#6e6e6e;white-space:pre;font-family:'Liberation Sans',sans-serif;font-size:12px;">X</div>
<div style="left:604.49px;top:495.80px;height:18px;line-height:18px;color:#6e6e6e;white-space:pre;font-family:'Liberation Sans',sans-serif;font-size:12px;">Y</div>
<svg style="left:390.00px;top:519.30px;" width="15" height="15" viewBox="0 0 15 15"><path d="M1 7.500a6.500 5.500 0 0 0 13 0z" fill="#9be39b"/><ellipse cx="7.500" cy="7.500" rx="6.500" ry="2.200" fill="#c6f2c6"/><path d="M7 7 11.500 1.500" stroke="#e8e8e8" stroke-width="1.500"/></svg>
<div style="left:410.50px;top:517.90px;height:18px;line-height:18px;color:#e4e4e4;white-space:pre;font-family:'Liberation Sans',sans-serif;font-size:12px;letter-spacing:-0.065px;">Behaviour Mixer</div>
<div style="left:570.69px;top:517.80px;height:18px;line-height:18px;color:#e4e4e4;white-space:pre;font-family:'Liberation Sans',sans-serif;font-size:12px;">X</div>
<div style="left:604.49px;top:517.80px;height:18px;line-height:18px;color:#e4e4e4;white-space:pre;font-family:'Liberation Sans',sans-serif;font-size:12px;">Y</div>
<svg style="left:390.00px;top:541.30px;" width="15" height="15" viewBox="0 0 15 15"><path d="M4.300 1.200h6.400L7.500 5z" fill="#9be39b"/><path d="M7.500 5.500v8.500" stroke="#9be39b" stroke-width="2"/><path d="M2.600 6.500v2.600M12.400 6.500v2.600" stroke="#d8d8d8" stroke-width="1"/></svg>
<div style="left:410.50px;top:539.90px;height:18px;line-height:18px;color:#e4e4e4;white-space:pre;font-family:'Liberation Sans',sans-serif;font-size:12px;letter-spacing:-0.618px;">Frame</div>
<div style="left:570.69px;top:539.80px;height:18px;line-height:18px;color:#e4e4e4;white-space:pre;font-family:'Liberation Sans',sans-serif;font-size:12px;">X</div>
<div style="left:604.49px;top:539.80px;height:18px;line-height:18px;color:#e4e4e4;white-space:pre;font-family:'Liberation Sans',sans-serif;font-size:12px;">Y</div>
<svg style="left:390.00px;top:563.30px;" width="15" height="15" viewBox="0 0 15 15"><path d="M2 1.500v11.500h11.500" fill="none" stroke="#d0d0d0" stroke-width="1" stroke-dasharray="1.500 1.500"/><path d="M2.500 12.500 12.500 2.500" stroke="#9be39b" stroke-width="1.200"/><path d="M8.500 2h4.500v4.500" fill="none" stroke="#9be39b" stroke-width="1.200"/></svg>
<div style="left:410.50px;top:561.90px;height:18px;line-height:18px;color:#e4e4e4;white-space:pre;font-family:'Liberation Sans',sans-serif;font-size:12px;letter-spacing:-0.067px;">Get Vector</div>
<div style="left:570.69px;top:561.80px;height:18px;line-height:18px;color:#6e6e6e;white-space:pre;font-family:'Liberation Sans',sans-serif;font-size:12px;">X</div>
<div style="left:604.49px;top:561.80px;height:18px;line-height:18px;color:#6e6e6e;white-space:pre;font-family:'Liberation Sans',sans-serif;font-size:12px;">Y</div>
<svg style="left:390.00px;top:585.30px;" width="15" height="15" viewBox="0 0 15 15"><rect x=".6" y="3.600" width="13.800" height="7.800" rx="3.900" fill="none" stroke="#e0e0e0" stroke-width="1.100"/><rect x="5.500" y="4.500" width="8" height="6" rx="3" fill="#9be39b"/></svg>
<div style="left:410.50px;top:583.90px;height:18px;line-height:18px;color:#e4e4e4;white-space:pre;font-family:'Liberation Sans',sans-serif;font-size:12px;letter-spacing:0.061px;">Is Within</div>
<div style="left:570.69px;top:583.80px;height:18px;line-height:18px;color:#e4e4e4;white-space:pre;font-family:'Liberation Sans',sans-serif;font-size:12px;">X</div>
<div style="left:604.49px;top:583.80px;height:18px;line-height:18px;color:#e4e4e4;white-space:pre;font-family:'Liberation Sans',sans-serif;font-size:12px;">Y</div>
<svg style="left:390.00px;top:607.30px;" width="15" height="15" viewBox="0 0 15 15"><rect x="0.3" y="0.3" width="2.300" height="2.300" fill="#e8e8e8"/><rect x="0.3" y="3.1999999999999997" width="2.300" height="2.300" fill="#9be39b"/><rect x="0.3" y="6.1" width="2.300" height="2.300" fill="#9be39b"/><rect x="0.3" y="9.0" width="2.300" height="2.300" fill="#9be39b"/><rect x="3.1999999999999997" y="0.3" width="2.300" height="2.300" fill="#9be39b"/><rect x="3.1999999999999997" y="6.1" width="2.300" height="2.300" fill="#9be39b"/><rect x="3.1999999999999997" y="9.0" width="2.300" height="2.300" fill="#9be39b"/><rect x="3.1999999999999997" y="11.9" width="2.300" height="2.300" fill="#9be39b"/><rect x="6.1" y="0.3" width="2.300" height="2.300" fill="#9be39b"/><rect x="6.1" y="3.1999999999999997" width="2.300" height="2.300" fill="#9be39b"/><rect x="6.1" y="6.1" width="2.300" height="2.300" fill="#e8e8e8"/><rect x="6.1" y="11.9" width="2.300" height="2.300" fill="#9be39b"/><rect x="9.0" y="3.1999999999999997" width="2.300" height="2.300" fill="#9be39b"/><rect x="9.0" y="6.1" width="2.300" height="2.300" fill="#9be39b"/><rect x="9.0" y="9.0" width="2.300" height="2.300" fill="#e8e8e8"/><rect x="9.0" y="11.9" width="2.300" height="2.300" fill="#9be39b"/><rect x="11.9" y="0.3" width="2.300" height="2.300" fill="#e8e8e8"/><rect x="11.9" y="3.1999999999999997" width="2.300" height="2.300" fill="#9be39b"/><rect x="11.9" y="9.0" width="2.300" height="2.300" fill="#9be39b"/><rect x="11.9" y="11.9" width="2.300" height="2.300" fill="#e8e8e8"/></svg>
<div style="left:410.50px;top:605.90px;height:18px;line-height:18px;color:#e4e4e4;white-space:pre;font-family:'Liberation Sans',sans-serif;font-size:12px;letter-spacing:-0.100px;">Material Sampler</div>
<div style="left:570.69px;top:605.80px;height:18px;line-height:18px;color:#e4e4e4;white-space:pre;font-family:'Liberation Sans',sans-serif;font-size:12px;">X</div>
<div style="left:604.49px;top:605.80px;height:18px;line-height:18px;color:#e4e4e4;white-space:pre;font-family:'Liberation Sans',sans-serif;font-size:12px;">Y</div>
<svg style="left:390.00px;top:629.30px;" width="15" height="15" viewBox="0 0 15 15"><path d="M.5 12.500h3v-10h3v10h2.500v-10h3v10h3" fill="none" stroke="#9be39b" stroke-width="1.200"/></svg>
<div style="left:410.50px;top:627.90px;height:18px;line-height:18px;color:#e4e4e4;white-space:pre;font-family:'Liberation Sans',sans-serif;font-size:12px;letter-spacing:0.089px;">Modulate</div>
<div style="left:570.69px;top:627.80px;height:18px;line-height:18px;color:#e4e4e4;white-space:pre;font-family:'Liberation Sans',sans-serif;font-size:12px;">X</div>
<div style="left:604.49px;top:627.80px;height:18px;line-height:18px;color:#e4e4e4;white-space:pre;font-family:'Liberation Sans',sans-serif;font-size:12px;">Y</div>
<svg style="left:390.00px;top:651.30px;" width="15" height="15" viewBox="0 0 15 15"><rect x="0.0" y="0.0" width="2.400" height="2.400" fill="#9be39b" fill-opacity="0.95"/><rect x="0.0" y="2.4" width="2.400" height="2.400" fill="#9be39b" fill-opacity="0.3"/><rect x="0.0" y="4.8" width="2.400" height="2.400" fill="#9be39b" fill-opacity="0.95"/><rect x="0.0" y="7.199999999999999" width="2.400" height="2.400" fill="#9be39b" fill-opacity="0.3"/><rect x="0.0" y="9.6" width="2.400" height="2.400" fill="#9be39b" fill-opacity="0.95"/><rect x="0.0" y="12.0" width="2.400" height="2.400" fill="#9be39b" fill-opacity="0.3"/><rect x="2.4" y="0.0" width="2.400" height="2.400" fill="#9be39b" fill-opacity="0.5"/><rect x="2.4" y="2.4" width="2.400" height="2.400" fill="#9be39b" fill-opacity="0.6"/><rect x="2.4" y="4.8" width="2.400" height="2.400" fill="#9be39b" fill-opacity="0.3"/><rect x="2.4" y="7.199999999999999" width="2.400" height="2.400" fill="#9be39b" fill-opacity="0.5"/><rect x="2.4" y="9.6" width="2.400" height="2.400" fill="#9be39b" fill-opacity="0.6"/><rect x="2.4" y="12.0" width="2.400" height="2.400" fill="#9be39b" fill-opacity="0.3"/><rect x="4.8" y="0.0" width="2.400" height="2.400" fill="#9be39b" fill-opacity="0.75"/><rect x="4.8" y="2.4" width="2.400" height="2.400" fill="#9be39b" fill-opacity="0.5"/><rect x="4.8" y="4.8" width="2.400" height="2.400" fill="#9be39b" fill-opacity="0.95"/><rect x="4.8" y="7.199999999999999" width="2.400" height="2.400" fill="#9be39b" fill-opacity="0.6"/><rect x="4.8" y="9.6" width="2.400" height="2.400" fill="#9be39b" fill-opacity="0.85"/><rect x="4.8" y="12.0" width="2.400" height="2.400" fill="#9be39b" fill-opacity="0.3"/><rect x="7.199999999999999" y="0.0" width="2.400" height="2.400" fill="#9be39b" fill-opacity="0.3"/><rect x="7.199999999999999" y="2.4" width="2.400" height="2.400" fill="#9be39b" fill-opacity="0.3"/><rect x="7.199999999999999" y="4.8" width="2.400" height="2.400" fill="#9be39b" fill-opacity="0.3"/><rect x="7.199999999999999" y="7.199999999999999" width="2.400" height="2.400" fill="#9be39b" fill-opacity="0.3"/><rect x="7.199999999999999" y="9.6" width="2.400" height="2.400" fill="#9be39b" fill-opacity="0.3"/><rect x="7.199999999999999" y="12.0" width="2.400" height="2.400" fill="#9be39b" fill-opacity="0.3"/><rect x="9.6" y="0.0" width="2.400" height="2.400" fill="#9be39b" fill-opacity="0.85"/><rect x="9.6" y="2.4" width="2.400" height="2.400" fill="#9be39b" fill-opacity="0.6"/><rect x="9.6" y="4.8" width="2.400" height="2.400" fill="#9be39b" fill-opacity="0.95"/><rect x="9.6" y="7.199999999999999" width="2.400" height="2.400" fill="#9be39b" fill-opacity="0.5"/><rect x="9.6" y="9.6" width="2.400" height="2.400" fill="#9be39b" fill-opacity="0.75"/><rect x="9.6" y="12.0" width="2.400" height="2.400" fill="#9be39b" fill-opacity="0.3"/><rect x="12.0" y="0.0" width="2.400" height="2.400" fill="#9be39b" fill-opacity="0.6"/><rect x="12.0" y="2.4" width="2.400" height="2.400" fill="#9be39b" fill-opacity="0.5"/><rect x="12.0" y="4.8" width="2.400" height="2.400" fill="#9be39b" fill-opacity="0.3"/><rect x="12.0" y="7.199999999999999" width="2.400" height="2.400" fill="#9be39b" fill-opacity="0.6"/><rect x="12.0" y="9.6" width="2.400" height="2.400" fill="#9be39b" fill-opacity="0.5"/><rect x="12.0" y="12.0" width="2.400" height="2.400" fill="#9be39b" fill-opacity="0.3"/></svg>
<div style="left:410.50px;top:649.90px;height:18px;line-height:18px;color:#e4e4e4;white-space:pre;font-family:'Liberation Sans',sans-serif;font-size:12px;letter-spacing:-0.347px;">Noise</div>
<div style="left:570.69px;top:649.80px;height:18px;line-height:18px;color:#e4e4e4;white-space:pre;font-family:'Liberation Sans',sans-serif;font-size:12px;">X</div>
<div style="left:604.49px;top:649.80px;height:18px;line-height:18px;color:#e4e4e4;white-space:pre;font-family:'Liberation Sans',sans-serif;font-size:12px;">Y</div>
<svg style="left:390.00px;top:673.30px;" width="15" height="15" viewBox="0 0 15 15"><rect x="7.500" y="1" width="4.500" height="13" fill="#9be39b"/><rect x="3.500" y="8" width="4" height="6" fill="#e8e8e8"/></svg>
<div style="left:410.50px;top:671.90px;height:18px;line-height:18px;color:#e4e4e4;white-space:pre;font-family:'Liberation Sans',sans-serif;font-size:12px;letter-spacing:-0.325px;">Number Range</div>
<div style="left:570.69px;top:671.80px;height:18px;line-height:18px;color:#e4e4e4;white-space:pre;font-family:'Liberation Sans',sans-serif;font-size:12px;">X</div>
<div style="left:604.49px;top:671.80px;height:18px;line-height:18px;color:#e4e4e4;white-space:pre;font-family:'Liberation Sans',sans-serif;font-size:12px;">Y</div>
<svg style="left:390.00px;top:695.30px;" width="15" height="15" viewBox="0 0 15 15"><path d="M-1 9C.5 3 2.500 1.500 3.800 5.500S6.500 13 8 7.500s2.800-6.500 4-2.500 2 7.500 4 2" fill="none" stroke="#9be39b" stroke-width="1.300"/></svg>
<div style="left:410.50px;top:693.90px;height:18px;line-height:18px;color:#e4e4e4;white-space:pre;font-family:'Liberation Sans',sans-serif;font-size:12px;letter-spacing:0.054px;">Oscillator</div>
<div style="left:570.69px;top:693.80px;height:18px;line-height:18px;color:#e4e4e4;white-space:pre;font-family:'Liberation Sans',sans-serif;font-size:12px;">X</div>
<div style="left:604.49px;top:693.80px;height:18px;line-height:18px;color:#e4e4e4;white-space:pre;font-family:'Liberation Sans',sans-serif;font-size:12px;">Y</div>
<svg style="left:390.00px;top:717.30px;" width="15" height="15" viewBox="0 0 15 15"><path d="M1.500 7.500C1.500 1.500 7.500 1.500 7.500 7.500S13.500 13.500 13.500 7.500" fill="none" stroke="#9be39b" stroke-width="1.200"/><rect x=".3" y="6.600" width="2.400" height="2.400" fill="#262626" stroke="#e8e8e8" stroke-width=".9"/><rect x="6.300" y="6.900" width="2.400" height="2.400" fill="#262626" stroke="#e8e8e8" stroke-width=".9"/><rect x="12.300" y="7.200" width="2.400" height="2.400" fill="#262626" stroke="#e8e8e8" stroke-width=".9"/></svg>
<div style="left:410.50px;top:715.90px;height:18px;line-height:18px;color:#e4e4e4;white-space:pre;font-family:'Liberation Sans',sans-serif;font-size:12px;letter-spacing:-0.045px;">Pathfinder</div>
<div style="left:570.69px;top:715.80px;height:18px;line-height:18px;color:#6e6e6e;white-space:pre;font-family:'Liberation Sans',sans-serif;font-size:12px;">X</div>
<div style="left:604.49px;top:715.80px;height:18px;line-height:18px;color:#6e6e6e;white-space:pre;font-family:'Liberation Sans',sans-serif;font-size:12px;">Y</div>
<svg style="left:390.00px;top:739.30px;" width="15" height="15" viewBox="0 0 15 15"><rect x="1" y="1" width="2.500" height="2.500" fill="#e8e8e8"/><rect x="12" y="12" width="2.500" height="2.500" fill="#e8e8e8"/><path d="M4.500 4.500 11 11" stroke="#9be39b" stroke-width="1.200"/><path d="M11 6.500v4.500h-4.500" fill="none" stroke="#9be39b" stroke-width="1.200"/></svg>
<div style="left:410.50px;top:737.90px;height:18px;line-height:18px;color:#e4e4e4;white-space:pre;font-family:'Liberation Sans',sans-serif;font-size:12px;letter-spacing:-0.171px;">Position Blend</div>
<div style="left:570.69px;top:737.80px;height:18px;line-height:18px;color:#6e6e6e;white-space:pre;font-family:'Liberation Sans',sans-serif;font-size:12px;">X</div>
<div style="left:604.49px;top:737.80px;height:18px;line-height:18px;color:#6e6e6e;white-space:pre;font-family:'Liberation Sans',sans-serif;font-size:12px;">Y</div>
<svg style="left:390.00px;top:761.30px;" width="15" height="15" viewBox="0 0 15 15"><path d="M0.7 0.7l2.600 2.600M3.3 0.7l-2.600 2.600" stroke="#9be39b" stroke-width="1"/><path d="M5.7 5.2l2.600 2.600M8.3 5.2l-2.600 2.600" stroke="#9be39b" stroke-width="1"/><path d="M1.2 10.2l2.600 2.600M3.8 10.2l-2.600 2.600" stroke="#9be39b" stroke-width="1"/><path d="M10.7 9.7l2.600 2.600M13.3 9.7l-2.600 2.600" stroke="#9be39b" stroke-width="1"/><rect x="10.500" y=".8" width="2.200" height="2.200" fill="#9be39b"/><rect x="11.800" y="5" width="1.800" height="1.800" fill="#9be39b"/><rect x="6" y="1.500" width="1.600" height="1.600" fill="#9be39b"/></svg>
<div style="left:410.50px;top:759.90px;height:18px;line-height:18px;color:#e4e4e4;white-space:pre;font-family:'Liberation Sans',sans-serif;font-size:12px;letter-spacing:-0.492px;">Random</div>
<div style="left:570.69px;top:759.80px;height:18px;line-height:18px;color:#e4e4e4;white-space:pre;font-family:'Liberation Sans',sans-serif;font-size:12px;">X</div>
<div style="left:604.49px;top:759.80px;height:18px;line-height:18px;color:#e4e4e4;white-space:pre;font-family:'Liberation Sans',sans-serif;font-size:12px;">Y</div>
<svg style="left:390.00px;top:783.30px;" width="15" height="15" viewBox="0 0 15 15"><path d="M2.500 7.500h10" stroke="#e0e0e0" stroke-width="1.100"/><path d="M7.500 1v5M7.500 9v5" stroke="#9be39b" stroke-width="1.100"/><path d="M5.500 3 7.500 1 9.500 3M5.500 12 7.500 14 9.500 12" fill="none" stroke="#9be39b" stroke-width="1"/></svg>
<div style="left:410.50px;top:781.90px;height:18px;line-height:18px;color:#e4e4e4;white-space:pre;font-family:'Liberation Sans',sans-serif;font-size:12px;letter-spacing:-0.444px;">Round</div>
<div style="left:570.69px;top:781.80px;height:18px;line-height:18px;color:#e4e4e4;white-space:pre;font-family:'Liberation Sans',sans-serif;font-size:12px;">X</div>
<div style="left:604.49px;top:781.80px;height:18px;line-height:18px;color:#e4e4e4;white-space:pre;font-family:'Liberation Sans',sans-serif;font-size:12px;">Y</div>
<svg style="left:390.00px;top:805.30px;" width="15" height="15" viewBox="0 0 15 15"><path d="M5 12v-10l8-1.500v10" fill="none" stroke="#9be39b" stroke-width="1.400"/><ellipse cx="3.300" cy="12" rx="2.300" ry="1.800" fill="#9be39b"/><ellipse cx="11.300" cy="10.500" rx="2.300" ry="1.800" fill="#9be39b"/><path d="M5 4.500 13 3" stroke="#9be39b" stroke-width="1.400"/></svg>
<div style="left:410.50px;top:803.90px;height:18px;line-height:18px;color:#e4e4e4;white-space:pre;font-family:'Liberation Sans',sans-serif;font-size:12px;letter-spacing:-0.651px;">Sound</div>
<div style="left:570.69px;top:803.80px;height:18px;line-height:18px;color:#e4e4e4;white-space:pre;font-family:'Liberation Sans',sans-serif;font-size:12px;">X</div>
<div style="left:604.49px;top:803.80px;height:18px;line-height:18px;color:#e4e4e4;white-space:pre;font-family:'Liberation Sans',sans-serif;font-size:12px;">Y</div>
<svg style="left:390.00px;top:827.30px;" width="15" height="15" viewBox="0 0 15 15"><rect x="1" y="2" width="8" height="2.800" fill="#9be39b"/><rect x="4" y="6.300" width="8" height="2.800" fill="#9be39b"/><rect x="7" y="10.600" width="7.500" height="2.800" fill="#9be39b"/></svg>
<div style="left:410.50px;top:825.90px;height:18px;line-height:18px;color:#e4e4e4;white-space:pre;font-family:'Liberation Sans',sans-serif;font-size:12px;letter-spacing:-0.455px;">Stagger</div>
<div style="left:570.69px;top:825.80px;height:18px;line-height:18px;color:#e4e4e4;white-space:pre;font-family:'Liberation Sans',sans-serif;font-size:12px;">X</div>
<div style="left:604.49px;top:825.80px;height:18px;line-height:18px;color:#e4e4e4;white-space:pre;font-family:'Liberation Sans',sans-serif;font-size:12px;">Y</div>
<div style="left:387.50px;top:845.30px;width:171.50px;height:21.90px;background:#444444;border-radius:2px;"></div>
<svg style="left:390.00px;top:849.30px;" width="15" height="15" viewBox="0 0 15 15"><path d="M2.100 4.200h9.600L6.900 11.300z" fill="none" stroke="#9be39b" stroke-width="1.200"/></svg>
<div style="left:410.50px;top:847.90px;height:18px;line-height:18px;color:#e4e4e4;white-space:pre;font-family:'Liberation Sans',sans-serif;font-size:12px;letter-spacing:-0.253px;">Value</div>
<div style="left:570.69px;top:847.80px;height:18px;line-height:18px;color:#e4e4e4;white-space:pre;font-family:'Liberation Sans',sans-serif;font-size:12px;">X</div>
<div style="left:604.49px;top:847.80px;height:18px;line-height:18px;color:#e4e4e4;white-space:pre;font-family:'Liberation Sans',sans-serif;font-size:12px;">Y</div>
<svg style="left:390.00px;top:871.30px;" width="15" height="15" viewBox="0 0 15 15"><path d="M.400 4.100h7.700L4.200 11.200z" fill="none" stroke="#9be39b" stroke-width="1.100"/><path d="M6.500 11.200 10.300 4.100h2.600L8.800 11.200" fill="none" stroke="#9be39b" stroke-width="1"/></svg>
<div style="left:410.50px;top:869.90px;height:18px;line-height:18px;color:#e4e4e4;white-space:pre;font-family:'Liberation Sans',sans-serif;font-size:12px;letter-spacing:-0.283px;">Value Blend</div>
<div style="left:570.69px;top:869.80px;height:18px;line-height:18px;color:#e4e4e4;white-space:pre;font-family:'Liberation Sans',sans-serif;font-size:12px;">X</div>
<div style="left:604.49px;top:869.80px;height:18px;line-height:18px;color:#e4e4e4;white-space:pre;font-family:'Liberation Sans',sans-serif;font-size:12px;">Y</div>
<svg style="left:390.00px;top:893.30px;" width="15" height="15" viewBox="0 0 15 15"><path d="M2.100 4.500h7.700L6 11.200z" fill="none" stroke="#9be39b" stroke-width="1.100"/><text x="10.300" y="5.500" font-size="7.500" font-family="Liberation Sans" fill="#e8e8e8">2</text></svg>
<div style="left:410.50px;top:891.90px;height:18px;line-height:18px;color:#e4e4e4;white-space:pre;font-family:'Liberation Sans',sans-serif;font-size:12px;letter-spacing:-0.157px;">Value2</div>
<div style="left:570.69px;top:891.80px;height:18px;line-height:18px;color:#6e6e6e;white-space:pre;font-family:'Liberation Sans',sans-serif;font-size:12px;">X</div>
<div style="left:604.49px;top:891.80px;height:18px;line-height:18px;color:#6e6e6e;white-space:pre;font-family:'Liberation Sans',sans-serif;font-size:12px;">Y</div>
<svg style="left:390.00px;top:915.30px;" width="15" height="15" viewBox="0 0 15 15"><path d="M.200 4.500h7L3.700 11.200z" fill="none" stroke="#9be39b" stroke-width="1.050"/><path d="M5.800 11.200 9 4.500h1.800" fill="none" stroke="#9be39b" stroke-width="1"/><text x="10.800" y="5.500" font-size="7.500" font-family="Liberation Sans" fill="#e8e8e8">2</text></svg>
<div style="left:410.50px;top:913.90px;height:18px;line-height:18px;color:#e4e4e4;white-space:pre;font-family:'Liberation Sans',sans-serif;font-size:12px;letter-spacing:-0.218px;">Value2 Blend</div>
<div style="left:570.69px;top:913.80px;height:18px;line-height:18px;color:#6e6e6e;white-space:pre;font-family:'Liberation Sans',sans-serif;font-size:12px;">X</div>
<div style="left:604.49px;top:913.80px;height:18px;line-height:18px;color:#6e6e6e;white-space:pre;font-family:'Liberation Sans',sans-serif;font-size:12px;">Y</div>
<svg style="left:390.00px;top:937.30px;" width="15" height="15" viewBox="0 0 15 15"><path d="M1.500 4h7.500L7 7.500M4.700 10 1.500 4" fill="none" stroke="#9be39b" stroke-width="1.050"/><text x="10.300" y="5" font-size="7.500" font-family="Liberation Sans" fill="#e8e8e8">2</text><rect x="7.500" y="8.300" width="6.500" height="6.500" fill="#9be39b"/><path d="M10.750 9.300v4.500M8.500 11.550h4.500" stroke="#1d1d1d" stroke-width="1.100"/></svg>
<div style="left:410.50px;top:935.90px;height:18px;line-height:18px;color:#e4e4e4;white-space:pre;font-family:'Liberation Sans',sans-serif;font-size:12px;letter-spacing:-0.268px;">Value2 Solver (Pro)</div>
<div style="left:570.69px;top:935.80px;height:18px;line-height:18px;color:#6e6e6e;white-space:pre;font-family:'Liberation Sans',sans-serif;font-size:12px;">X</div>
<div style="left:604.49px;top:935.80px;height:18px;line-height:18px;color:#6e6e6e;white-space:pre;font-family:'Liberation Sans',sans-serif;font-size:12px;">Y</div>
<div style="left:384.00px;top:839.00px;width:178.50px;height:33.50px;border:3px solid #b5e61d;background:none;"></div>
<div style="left:387.00px;top:842.00px;width:172.50px;height:27.50px;background:#262626;"></div>
<div style="left:387.50px;top:845.30px;width:171.50px;height:21.90px;background:#444444;border-radius:2px;"></div>
<svg style="left:390.00px;top:849.30px;" width="15" height="15" viewBox="0 0 15 15"><path d="M2.100 4.200h9.600L6.900 11.300z" fill="none" stroke="#9be39b" stroke-width="1.200"/></svg>
<div style="left:410.50px;top:847.90px;height:18px;line-height:18px;color:#e4e4e4;white-space:pre;font-family:'Liberation Sans',sans-serif;font-size:12px;letter-spacing:-0.253px;">Value</div>
<div style="left:-1.40px;top:335.00px;width:158.50px;height:33.10px;border:3.200px solid #b5e61d;"></div>
<div style="left:145.20px;top:491.40px;width:231.90px;height:26.90px;border:3px solid #b5e61d;"></div>
<div style="left:634.20px;top:800.30px;width:227.50px;height:29.20px;border:3px solid #b5e61d;"></div>
</div></body></html>
